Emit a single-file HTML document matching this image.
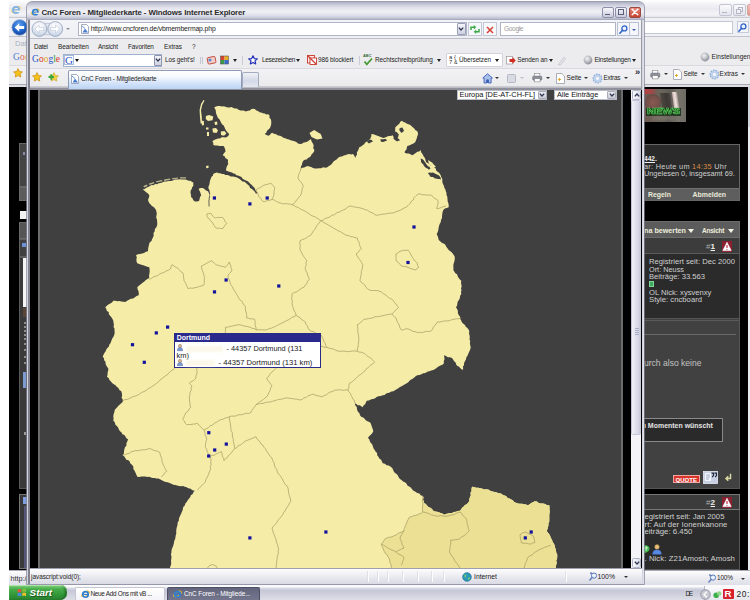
<!DOCTYPE html>
<html lang="de">
<head>
<meta charset="utf-8">
<title>CnC Foren - Mitgliederkarte - Windows Internet Explorer</title>
<style>
html,body{margin:0;padding:0;}
body{width:750px;height:600px;overflow:hidden;position:relative;background:#fff;font-family:"Liberation Sans",sans-serif;font-size:7.5px;color:#1c1c1c;}
.a{position:absolute;white-space:nowrap;}
.t{position:absolute;white-space:nowrap;line-height:10px;height:10px;}
.inp{background:#fff;border:1px solid #b4b9c9;box-sizing:border-box;}
.ar{position:absolute;width:0;height:0;border-left:2px solid transparent;border-right:2px solid transparent;border-top:2.5px solid #333;}
.sq{position:absolute;width:3px;height:3px;background:#10109a;}
svg{position:absolute;overflow:visible;}
</style>
</head>
<body>

<!-- ================= BACK WINDOW ================= -->
<div class="a" style="left:9.3px;top:0.0px;width:741.0px;height:586.0px;background:#000;"></div>
<div class="a" style="left:9.3px;top:0.0px;width:741.0px;height:18.0px;background:linear-gradient(#ffffff,#f3f3f7 25%,#e9e9ef 50%,#f4f4f8 85%,#e4e4ea);border-bottom:1px solid #c9cad2;box-sizing:border-box;"></div>
<div class="a" style="left:9.3px;top:18.0px;width:741.0px;height:19.0px;background:#eff0f4;border-bottom:1px solid #c2c3cc;box-sizing:border-box;"></div>
<div class="a" style="left:9.3px;top:37.0px;width:741.0px;height:28.0px;background:#ececee;"></div>
<div class="a" style="left:9.3px;top:64.5px;width:741.0px;height:20.5px;background:linear-gradient(#f1f1f3,#ebebee);border-top:1px solid #d9d9de;border-bottom:1px solid #a9aab4;box-sizing:border-box;"></div>
<div class="a" style="left:9.3px;top:85.0px;width:741.0px;height:2.0px;background:#dcdde2;"></div>
<svg style="left:10.8px;top:3.5px" width="10" height="11" viewBox="0 0 20 22"><ellipse cx="10" cy="11" rx="9.5" ry="4.2" transform="rotate(-32 10 11)" fill="none" stroke="#efd27a" stroke-width="2.2"/><circle cx="10" cy="12" r="6.2" fill="none" stroke="#7fb2e4" stroke-width="3.4"/><rect x="5" y="10.6" width="11" height="2.6" fill="#7fb2e4"/><rect x="11" y="13.2" width="7" height="3" fill="#f5f5f9"/></svg>
<svg style="left:11px;top:19px" width="17" height="17" viewBox="0 0 17 17"><defs><radialGradient id="bb" cx="0.45" cy="0.3" r="0.75"><stop offset="0" stop-color="#5aa0f0"/><stop offset="0.6" stop-color="#1f62c8"/><stop offset="1" stop-color="#123f95"/></radialGradient></defs><circle cx="8.7" cy="8.5" r="7.8" fill="url(#bb)" stroke="#8fa5cc" stroke-width="0.8"/><path d="M3.6 8.5L8.2 4.2v2.7h5v3.2h-5v2.7z" fill="#fff"/></svg>
<div class="t" style="left:15.0px;top:38.8px;font-size:7.71px;color:#a9b0c0;">Datei</div>
<div class="t" style="left:13px;top:49.5px;font-size:9.51px;font-family:'Liberation Serif',serif;line-height:14px;height:14px;"><span style="color:#4f78d8">G</span><span style="color:#e06a5c">o</span><span style="color:#ecc050">o</span><span style="color:#4f78d8">g</span><span style="color:#5fb56c">l</span><span style="color:#e06a5c">e</span></div>
<svg style="left:13px;top:68.3px" width="10" height="10" viewBox="0 0 10 10"><path d="M5 0.6l1.4 2.9 3.1.4-2.3 2.1.6 3.1L5 7.6 2.2 9.1l.6-3.1L.5 3.9l3.1-.4z" fill="#f5c21c" stroke="#c98a10" stroke-width="0.7" stroke-linejoin="round"/></svg>
<div class="a" style="left:19.0px;top:142.7px;width:8.5px;height:44.0px;background:#444;border:1px solid #666;border-right:none;box-sizing:border-box;"></div>
<div class="a" style="left:23.0px;top:152.0px;width:2.0px;height:3.0px;background:#8a8ab0;"></div>
<div class="a" style="left:19.0px;top:186.7px;width:8.5px;height:14.0px;background:#5c5c5c;border:1px solid #6a6a6a;border-right:none;box-sizing:border-box;"></div>
<div class="a" style="left:20.0px;top:211.0px;width:7.5px;height:7.5px;background:#f2f2f2;"></div>
<div class="a" style="left:19.0px;top:221.7px;width:8.5px;height:17.0px;background:#555;border:1px solid #6a6a6a;border-right:none;box-sizing:border-box;"></div>
<div class="a" style="left:19.0px;top:238.5px;width:8.5px;height:18.5px;background:#404040;border:1px solid #606060;border-right:none;box-sizing:border-box;"></div>
<div class="a" style="left:22.3px;top:242.7px;width:4.0px;height:4.6px;background:#6f8fd8;"></div>
<div class="a" style="left:19.0px;top:257.0px;width:8.5px;height:231.5px;background:#3a3a3a;border:1px solid #5a5a5a;border-right:none;box-sizing:border-box;"></div>
<div class="a" style="left:23.3px;top:258.0px;width:4.0px;height:49.0px;background:#f5f5f5;"></div>
<div class="a" style="left:22.5px;top:308.0px;width:4.5px;height:9.0px;background:#5a4638;"></div>
<div class="a" style="left:23.5px;top:322.0px;width:2.0px;height:2.2px;background:#8e8e8e;"></div>
<div class="a" style="left:23.5px;top:326.0px;width:2.0px;height:2.2px;background:#8e8e8e;"></div>
<div class="a" style="left:23.5px;top:330.0px;width:2.0px;height:2.2px;background:#8e8e8e;"></div>
<div class="a" style="left:23.5px;top:334.0px;width:2.0px;height:2.2px;background:#8e8e8e;"></div>
<div class="a" style="left:23.5px;top:338.0px;width:2.0px;height:2.2px;background:#8e8e8e;"></div>
<div class="a" style="left:23.5px;top:343.0px;width:2.0px;height:2.2px;background:#8e8e8e;"></div>
<div class="a" style="left:23.5px;top:349.0px;width:2.0px;height:2.2px;background:#8e8e8e;"></div>
<div class="a" style="left:23.5px;top:356.0px;width:2.0px;height:2.2px;background:#8e8e8e;"></div>
<div class="a" style="left:23.5px;top:362.0px;width:2.0px;height:2.2px;background:#8e8e8e;"></div>
<div class="a" style="left:22.5px;top:372.0px;width:3.5px;height:16.0px;background:#7c9cd0;"></div>
<div class="a" style="left:23.5px;top:432.0px;width:2.0px;height:3.0px;background:#9a9a9a;"></div>
<div class="a" style="left:19.0px;top:494.0px;width:8.5px;height:75.0px;background:#3a3a3a;border:1px solid #777;border-right:none;box-sizing:border-box;"></div>
<div class="a" style="left:22.5px;top:497.0px;width:4.0px;height:6.5px;background:#7f9fe0;"></div>
<div class="a" style="left:23.5px;top:506.0px;width:2.5px;height:62.0px;background:#55557a;"></div>
<div class="a" style="left:9.3px;top:570.0px;width:741.0px;height:15.5px;background:linear-gradient(#fdfdfe,#ececf2 45%,#dcdde6);border-top:1px solid #a7a9b8;box-sizing:border-box;"></div>
<div class="t" style="left:10.4px;top:573.6px;font-size:7.32px;color:#333;">http://</div>
<div class="a" style="left:719.0px;top:4.0px;width:12.5px;height:11.5px;background:linear-gradient(#fbfbfd,#e3e4ec);border:1px solid #c3c5d3;border-radius:2px;box-sizing:border-box;"></div>
<div class="a" style="left:722.0px;top:11.5px;width:5.0px;height:1.6px;background:#b4b6c8;"></div>
<div class="a" style="left:733.0px;top:4.0px;width:12.5px;height:11.5px;background:linear-gradient(#fbfbfd,#e3e4ec);border:1px solid #c3c5d3;border-radius:2px;box-sizing:border-box;"></div>
<div class="a" style="left:737.5px;top:7.0px;width:5.0px;height:4.5px;background:transparent;border:1px solid #b4b6c8;box-sizing:border-box;"></div>
<div class="a" style="left:735.5px;top:9.0px;width:5.0px;height:4.5px;background:#f1f1f6;border:1px solid #b4b6c8;box-sizing:border-box;"></div>
<div class="a" style="left:747.0px;top:4.0px;width:12.5px;height:11.5px;background:linear-gradient(#f3c0b8,#e39588);border:1px solid #d3a8a0;border-radius:2px;box-sizing:border-box;"></div>
<div class="a" style="left:640.0px;top:20.5px;width:92.5px;height:13.0px;background:#fff;border:1px solid #c3c7d6;box-sizing:border-box;"></div>
<div class="a" style="left:736.5px;top:20.5px;width:12.0px;height:12.5px;background:#f4f6fb;border:1px solid #c5cbdc;box-sizing:border-box;"></div>
<svg style="left:738.3px;top:22.5px" width="9" height="9" viewBox="0 0 9 9"><circle cx="5.4" cy="3.4" r="2.5" fill="#eaf2ff" stroke="#2d62c8" stroke-width="1.3"/><path d="M3.6 5.3L0.9 8.2" stroke="#2d62c8" stroke-width="1.6" stroke-linecap="round"/></svg>
<svg style="left:699.5px;top:52px" width="10" height="10" viewBox="0 0 10 10"><circle cx="5" cy="5" r="4.4" fill="url(#bl)"/></svg>
<div class="t" style="left:711.6px;top:51.8px;font-size:6.48px;color:#222;">Einstellungen</div>
<svg style="left:649.5px;top:69.5px" width="10.5" height="9.6" viewBox="0 0 12 11"><rect x="3" y="0.5" width="6" height="3.5" fill="#fff" stroke="#777" stroke-width="0.6"/><rect x="0.8" y="3.6" width="10.4" height="4.6" rx="1" fill="#8e919c" stroke="#5d606b" stroke-width="0.6"/><rect x="2.8" y="6.6" width="6.4" height="3.6" fill="#fff" stroke="#777" stroke-width="0.6"/></svg>
<div class="ar" style="left:663.9px;top:72.9px;border-top-color:#333;border-left-width:2.1px;border-right-width:2.1px;border-top-width:2.6px"></div>
<svg style="left:672.5px;top:69px" width="9" height="11" viewBox="0 0 9 11"><path d="M0.5 0.5h5.3l2.7 2.7v7.3h-8z" fill="#fff" stroke="#8b8f9e" stroke-width="0.7"/><path d="M2 6.5h3M3.5 5v3" stroke="#e0a020" stroke-width="0.9"/></svg>
<div class="t" style="left:683.6px;top:69.4px;font-size:6.42px;letter-spacing:-0.16px;color:#222;">Seite</div>
<div class="ar" style="left:700.5px;top:72.9px;border-top-color:#333;border-left-width:2.1px;border-right-width:2.1px;border-top-width:2.6px"></div>
<svg style="left:708.5px;top:69px" width="11" height="11" viewBox="0 0 11 11"><circle cx="5.5" cy="5.5" r="4.3" fill="#c4d6ee" stroke="#8fb0dc" stroke-width="1.3" stroke-dasharray="1.7 0.9"/><circle cx="5.5" cy="5.5" r="2.1" fill="#f4f7fc" stroke="#a9c0e0" stroke-width="0.6"/></svg>
<div class="t" style="left:719.6px;top:69.4px;font-size:6.49px;color:#222;">Extras</div>
<div class="ar" style="left:741.4px;top:72.9px;border-top-color:#333;border-left-width:2.1px;border-right-width:2.1px;border-top-width:2.6px"></div>
<div class="a" style="left:644.4px;top:89.2px;width:41.2px;height:32.4px;background:linear-gradient(90deg,#6e5a52,#6a665c 45%,#5e5a54 60%,#77746c 80%,#6f6c66);"></div>
<div class="a" style="left:644.4px;top:89.2px;width:13.0px;height:4.5px;background:linear-gradient(90deg,#b84040,#a04848 60%,rgba(120,90,80,0));"></div>
<div class="a" style="left:644.8px;top:94.0px;width:16.5px;height:17.0px;background:radial-gradient(circle at 50% 50%,#8a5a52,#74504a 55%,#5a4640 80%,rgba(90,80,70,0));border-radius:50%;"></div>
<div class="a" style="left:661.0px;top:93.0px;width:10.0px;height:16.0px;background:linear-gradient(90deg,#4e4842,#3e3834 60%,#4a4440);transform:skewX(8deg);"></div>
<div class="a" style="left:672.8px;top:92.0px;width:5.0px;height:16.0px;background:linear-gradient(90deg,#c9b0ac,#f0e4e0 50%,#a89890);transform:skewX(8deg);filter:blur(0.4px);"></div>
<div class="a" style="left:646.0px;top:107.5px;width:35.0px;height:8.0px;background:rgba(10,40,12,0.75);filter:blur(0.5px);"></div>
<div class="t" style="left:646.8px;top:106.3px;font-size:9.57px;font-weight:bold;color:#14501a;-webkit-text-stroke:0.55px #5fdc5f;transform-origin:0 50%;transform:scaleX(1.157);">NEWS</div>
<div class="a" style="left:652.0px;top:116.0px;width:22.0px;height:4.0px;background:rgba(150,140,128,0.35);filter:blur(0.8px);"></div>
<div class="a" style="left:630.0px;top:143.8px;width:109.5px;height:57.0px;background:#2a2a2a;border:1px solid #666;box-sizing:border-box;"></div>
<div class="t" style="left:644.0px;top:154.4px;font-size:6.59px;font-weight:bold;color:#f0f0f0;text-decoration:underline;">442</div>
<div class="t" style="left:655.0px;top:154.4px;font-size:7.20px;font-weight:bold;color:#f0f0f0;">.</div>
<div class="t" style="left:644px;top:161.9px;font-size:7.3px;color:#cfcfcf;letter-spacing:0.3px;">ar: Heute um <span style="color:#d68a4a">14:35</span> Uhr</div>
<div class="t" style="left:644.0px;top:169.2px;font-size:7.34px;color:#cfcfcf;">Ungelesen 0, insgesamt 69.</div>
<div class="a" style="left:630.0px;top:187.5px;width:109.0px;height:12.5px;background:#5e5e5e;border-top:1px solid #707070;box-sizing:border-box;"></div>
<div class="t" style="left:648.0px;top:189.9px;font-size:6.90px;font-weight:bold;color:#e9e9da;">Regeln</div>
<div class="t" style="left:692.5px;top:189.9px;font-size:6.93px;font-weight:bold;color:#e9e9da;">Abmelden</div>
<div class="a" style="left:630.0px;top:221.3px;width:109.5px;height:17.0px;background:#5c5c5c;border:1px solid #6c6c6c;box-sizing:border-box;"></div>
<div class="t" style="left:644.0px;top:225.9px;font-size:7.20px;font-weight:bold;color:#eeeedd;">na bewerten</div>
<div class="ar" style="left:687.6px;top:229.0px;border-top-color:#f4f4e8;border-left-width:3.4px;border-right-width:3.4px;border-top-width:4.2px"></div>
<div class="t" style="left:702.0px;top:225.9px;font-size:6.57px;letter-spacing:-0.27px;font-weight:bold;color:#eeeedd;">Ansicht</div>
<div class="ar" style="left:727.6px;top:229.0px;border-top-color:#f4f4e8;border-left-width:3.4px;border-right-width:3.4px;border-top-width:4.2px"></div>
<div class="a" style="left:630.0px;top:238.0px;width:109.5px;height:16.0px;background:#3c3c3c;border:1px solid #5a5a5a;border-top:none;box-sizing:border-box;"></div>
<div class="t" style="left:706.0px;top:242.2px;font-size:8.09px;color:#aaa;">#</div>
<div class="t" style="left:710.5px;top:242.2px;font-size:8.09px;font-weight:bold;color:#f0f0f0;text-decoration:underline;">1</div>
<svg style="left:722.0px;top:241.0px" width="10" height="11" viewBox="0 0 10 11"><rect x="0" y="0" width="10" height="11" fill="#8a2030"/><path d="M5 1.3L9.2 9.6H0.8z" fill="#fff" stroke="#fff" stroke-width="0.6" stroke-linejoin="round"/><path d="M5 4v3M5 7.9v.9" stroke="#c0203a" stroke-width="1.1"/></svg>
<div class="a" style="left:630.0px;top:254.0px;width:109.5px;height:65.0px;background:#2b2b2b;border:1px solid #555;border-top:none;box-sizing:border-box;"></div>
<div class="t" style="left:649.0px;top:257.2px;font-size:7.66px;color:#cfcfcf;">Registriert seit: Dec 2000</div>
<div class="t" style="left:649.0px;top:264.7px;font-size:7.32px;color:#cfcfcf;">Ort: Neuss</div>
<div class="t" style="left:649.0px;top:272.4px;font-size:7.63px;color:#cfcfcf;">Beiträge: 33.563</div>
<div class="a" style="left:649.0px;top:281.3px;width:5.0px;height:5.5px;background:#3fa860;border:1px solid #7fd89a;box-sizing:border-box;"></div>
<div class="t" style="left:649.0px;top:287.9px;font-size:7.63px;color:#cfcfcf;">OL Nick: xysvenxy</div>
<div class="t" style="left:649.0px;top:295.4px;font-size:7.69px;color:#cfcfcf;">Style: cncboard</div>
<div class="a" style="left:630.0px;top:319.0px;width:109.5px;height:170.0px;background:#414141;border:1px solid #555;border-top:none;box-sizing:border-box;"></div>
<div class="a" style="left:631.0px;top:320.0px;width:107.5px;height:0.8px;background:#5a5a5a;"></div>
<div class="a" style="left:644.0px;top:333.6px;width:92.0px;height:0.8px;background:#6a6a6a;"></div>
<div class="t" style="left:644.0px;top:358.3px;font-size:8.55px;color:#c4c4c4;">urch also keine</div>
<div class="a" style="left:630.0px;top:418.0px;width:92.5px;height:24.0px;background:#2a2a2a;border:1px solid #8a8a8a;box-sizing:border-box;"></div>
<div class="t" style="left:644.0px;top:421.2px;font-size:6.98px;font-weight:bold;color:#e4e4e4;">ı Momenten wünscht</div>
<div class="a" style="left:673.0px;top:475.3px;width:26.5px;height:7.5px;background:#d8342c;border:1px solid #f0a8a0;box-sizing:border-box;"></div>
<div class="t" style="left:675.5px;top:474.6px;font-size:6.05px;font-weight:bold;color:#fff;">QUOTE</div>
<svg style="left:703px;top:471px" width="15" height="13" viewBox="0 0 15 13"><rect x="0.5" y="0.5" width="14" height="12" fill="#c8d0e4" stroke="#e8ecf8" stroke-width="0.8"/><rect x="2" y="2" width="6" height="8" fill="#f4f6fc"/><path d="M8.5 2.2h2v2.2l-1.2 1.8M11.5 2.2h2v2.2l-1.2 1.8" stroke="#20243a" stroke-width="1.2" fill="none"/><path d="M3 4h4M3 6h4M3 8h3" stroke="#6a7aa0" stroke-width="0.6"/></svg>
<svg style="left:724px;top:473px" width="9" height="10" viewBox="0 0 9 10"><path d="M6.5 0.8v4.7H2.6M4.3 3.4L2 5.6l2.3 2.2" fill="none" stroke="#d8d8a0" stroke-width="1.5"/></svg>
<div class="a" style="left:630.0px;top:493.8px;width:109.5px;height:16.5px;background:#3c3c3c;border:1px solid #777;box-sizing:border-box;"></div>
<div class="t" style="left:706.0px;top:497.9px;font-size:8.09px;color:#aaa;">#</div>
<div class="t" style="left:710.5px;top:497.9px;font-size:8.09px;font-weight:bold;color:#f0f0f0;text-decoration:underline;">2</div>
<svg style="left:722.0px;top:496.5px" width="10" height="11" viewBox="0 0 10 11"><rect x="0" y="0" width="10" height="11" fill="#8a2030"/><path d="M5 1.3L9.2 9.6H0.8z" fill="#fff" stroke="#fff" stroke-width="0.6" stroke-linejoin="round"/><path d="M5 4v3M5 7.9v.9" stroke="#c0203a" stroke-width="1.1"/></svg>
<div class="a" style="left:630.0px;top:510.0px;width:109.5px;height:60.0px;background:#2b2b2b;border:1px solid #555;border-top:none;box-sizing:border-box;"></div>
<div class="t" style="left:644.5px;top:512.4px;font-size:7.74px;color:#cfcfcf;">egistriert seit: Jan 2005</div>
<div class="t" style="left:644.5px;top:519.9px;font-size:7.78px;letter-spacing:0.10px;color:#cfcfcf;">rt: Auf der Ionenkanone</div>
<div class="t" style="left:644.5px;top:527.4px;font-size:7.78px;letter-spacing:0.03px;color:#cfcfcf;">eiträge: 6.450</div>
<svg style="left:644px;top:543.5px" width="20" height="11" viewBox="0 0 20 11"><path d="M0 1.5c3-.8 5 .6 5.5 2.6.4 2-1 4.5-5.5 5z" fill="#3fb850"/><path d="M0 4h4M2.2 2v5" stroke="#d8f8d0" stroke-width="0.9"/><circle cx="13" cy="3" r="2.4" fill="#e8c078" stroke="#8a6a30" stroke-width="0.5"/><path d="M8.5 10.5c0-3.6 1.8-4.8 4.5-4.8s4.5 1.2 4.5 4.8z" fill="#5a8ae0" stroke="#2a4a90" stroke-width="0.5"/></svg>
<div class="t" style="left:644.5px;top:554.2px;font-size:7.78px;letter-spacing:0.05px;color:#cfcfcf;">. Nick: Z21Amosh; Amosh</div>
<div class="a" style="left:747.5px;top:87.0px;width:2.5px;height:483.0px;background:#eaeaf0;"></div>
<div class="a" style="left:747.5px;top:87.0px;width:2.5px;height:40.0px;background:#d2d3da;"></div>
<svg style="left:708px;top:573.5px" width="9" height="9" viewBox="0 0 9 9"><circle cx="5" cy="3.6" r="2.6" fill="#eaf2ff" stroke="#5a7ab8" stroke-width="1"/><path d="M3.2 5.4L0.9 8" stroke="#5a7ab8" stroke-width="1.4" stroke-linecap="round"/><path d="M1 1.2h2M2 .2v2" stroke="#3a58a8" stroke-width="0.7"/></svg>
<div class="t" style="left:717.0px;top:573.3px;font-size:6.42px;letter-spacing:-0.14px;color:#222;">100%</div>
<div class="ar" style="left:741.4px;top:577.5px;border-top-color:#333;border-left-width:2.1px;border-right-width:2.1px;border-top-width:2.6px"></div>

<!-- ================= FRONT WINDOW ================= -->
<div class="a" style="left:27.0px;top:2.0px;width:617.0px;height:582.0px;background:#d2d4df;border-radius:5px 5px 0 0;box-shadow:0 0 0 0.7px #7e8196;"></div>
<div class="a" style="left:27.0px;top:2.0px;width:617.0px;height:17.5px;background:linear-gradient(#adb0c3,#c9cbd9 14%,#e2e3ec 32%,#f0f0f5 55%,#d9dbe6 78%,#b4b7c9 96%,#8f92a4);border-radius:5px 5px 0 0;"></div>
<div class="a" style="left:29.5px;top:19.5px;width:612.0px;height:19.5px;background:linear-gradient(#f4f5f8,#eeeff3);border-bottom:1px solid #bcbeca;box-sizing:border-box;"></div>
<div class="a" style="left:29.5px;top:39.0px;width:612.0px;height:14.0px;background:#ececee;"></div>
<div class="a" style="left:29.5px;top:53.0px;width:612.0px;height:15.0px;background:#ececee;"></div>
<div class="a" style="left:29.5px;top:68.0px;width:612.0px;height:18.0px;background:linear-gradient(#f2f2f4,#ebebee);border-top:1px solid #d9d9de;box-sizing:border-box;"></div>
<div class="a" style="left:29.5px;top:86.0px;width:612.0px;height:2.0px;background:linear-gradient(#d5d6dc,#b4b5bc);"></div>
<div class="a" style="left:29.5px;top:88.0px;width:612.0px;height:2.0px;background:#8f9099;"></div>
<div class="a" style="left:28.4px;top:19.5px;width:1.5px;height:564.0px;background:#81828d;"></div>
<div class="a" style="left:641.1px;top:19.5px;width:1.4px;height:564.0px;background:#9b9ca6;"></div>
<div class="a" style="left:642.5px;top:19.5px;width:1.5px;height:564.0px;background:#dfe0e8;"></div>
<svg style="left:31.3px;top:6.8px" width="8.6" height="9.5" viewBox="0 0 20 22"><ellipse cx="10" cy="11" rx="9.5" ry="4.2" transform="rotate(-32 10 11)" fill="none" stroke="#e8b730" stroke-width="2.2"/><circle cx="10" cy="12" r="6.2" fill="none" stroke="#2f7fd0" stroke-width="3.4"/><rect x="5" y="10.6" width="11" height="2.6" fill="#2f7fd0"/><rect x="11" y="13.2" width="7" height="3" fill="#f1f1f6"/></svg>
<div class="t" style="left:41.5px;top:7.7px;font-size:7.90px;letter-spacing:-0.12px;font-weight:bold;color:#2b2b2b;">CnC Foren - Mitgliederkarte - Windows Internet Explorer</div>
<div class="a" style="left:601.5px;top:6.5px;width:12.0px;height:11.0px;background:linear-gradient(#f6f7fb,#c9cbdc);border:1px solid #8d90a8;border-radius:2px;box-sizing:border-box;"></div>
<div class="a" style="left:604.5px;top:13.5px;width:5.0px;height:1.6px;background:#5b5f7c;"></div>
<div class="a" style="left:615.0px;top:6.5px;width:12.0px;height:11.0px;background:linear-gradient(#f6f7fb,#c9cbdc);border:1px solid #8d90a8;border-radius:2px;box-sizing:border-box;"></div>
<div class="a" style="left:617.8px;top:9.0px;width:6.5px;height:5.5px;background:transparent;border:1px solid #5b5f7c;border-top-width:1.8px;box-sizing:border-box;"></div>
<div class="a" style="left:628.5px;top:6.5px;width:12.0px;height:11.0px;background:linear-gradient(#e88a7a,#c8402e);border:1px solid #9a4a40;border-radius:2px;box-sizing:border-box;"></div>
<svg style="left:630.5px;top:8px" width="8" height="8" viewBox="0 0 8 8"><path d="M1.2 1.2L6.8 6.8M6.8 1.2L1.2 6.8" stroke="#fff" stroke-width="1.5" stroke-linecap="round"/></svg>
<svg style="left:31px;top:20px" width="34" height="18" viewBox="0 0 34 18"><defs><radialGradient id="nb" cx="0.5" cy="0.3" r="0.75"><stop offset="0" stop-color="#ffffff"/><stop offset="0.55" stop-color="#e4e9f2"/><stop offset="1" stop-color="#b4c4dc"/></radialGradient></defs><rect x="8" y="3.2" width="17" height="11.600" fill="#e3e7ef" stroke="#aab4c8" stroke-width="0.700"/><circle cx="8.400" cy="9" r="7.400" fill="url(#nb)" stroke="#9eaac2" stroke-width="0.900"/><circle cx="24.200" cy="9" r="7.400" fill="url(#nb)" stroke="#9eaac2" stroke-width="0.900"/><path d="M3.900 9L8.100 5v2.600h4.700v2.800H8.100V13z" fill="#fff" stroke="#b4bfd4" stroke-width="0.600"/><path d="M28.700 9L24.500 5v2.600h-4.700v2.800h4.700V13z" fill="#fff" stroke="#b4bfd4" stroke-width="0.600"/></svg>
<div class="ar" style="left:65.8px;top:28.0px;border-top-color:#8a8fa0;border-left-width:2.2px;border-right-width:2.2px;border-top-width:2.8px"></div>
<div class="a" style="left:77.5px;top:22.0px;width:389.0px;height:14.0px;background:#fff;border:1px solid #aeb4c6;box-sizing:border-box;"></div>
<svg style="left:81px;top:24px" width="8" height="10" viewBox="0 0 8 10"><path d="M0.5 0.5h5l2 2v7h-7z" fill="#fff" stroke="#7d8aa5" stroke-width="0.7"/><path d="M1.5 8.5L4 4.5l3 4z" fill="#4a7fd0"/><path d="M1 2l3 2.5" stroke="#4a7fd0" stroke-width="0.8"/></svg>
<div class="t" style="left:90.7px;top:24.1px;font-size:6.84px;letter-spacing:-0.13px;color:#222;">http://www.cncforen.de/vbmembermap.php</div>
<div class="a" style="left:456.5px;top:23.0px;width:9.0px;height:12.0px;background:linear-gradient(#f4f5fa,#ccd0df);border:1px solid #9aa0b8;box-sizing:border-box;border-radius:1px;"></div>
<svg style="left:458px;top:27px" width="6" height="4" viewBox="0 0 6 4"><path d="M0.8 0.6L3 3l2.2-2.4" fill="none" stroke="#2c3350" stroke-width="1.2"/></svg>
<div class="a" style="left:468.0px;top:22.0px;width:13.5px;height:14.0px;background:#f7f8fb;border:1px solid #c3c7d6;box-sizing:border-box;"></div>
<svg style="left:470px;top:24.5px" width="10" height="9" viewBox="0 0 10 9"><path d="M1 5V2.2h3.5" fill="none" stroke="#39a845" stroke-width="1.5"/><path d="M3.8 0l2.4 2.2-2.4 2.2z" fill="#39a845"/><path d="M9 4v2.8H5.5" fill="none" stroke="#39a845" stroke-width="1.5"/><path d="M6.2 9L3.8 6.8l2.4-2.2z" fill="#39a845"/></svg>
<div class="a" style="left:483.0px;top:22.0px;width:13.5px;height:14.0px;background:#f7f8fb;border:1px solid #c3c7d6;box-sizing:border-box;"></div>
<svg style="left:486px;top:25.5px" width="8" height="8" viewBox="0 0 8 8"><path d="M1 1L7 7M7 1L1 7" stroke="#d64538" stroke-width="1.6"/></svg>
<div class="a" style="left:500.0px;top:22.0px;width:116.0px;height:14.0px;background:#fff;border:1px solid #aeb4c6;box-sizing:border-box;"></div>
<div class="t" style="left:504.0px;top:24.1px;font-size:6.66px;letter-spacing:-0.40px;color:#9a9a9a;">Google</div>
<div class="a" style="left:617.0px;top:22.0px;width:12.5px;height:14.0px;background:#f4f6fb;border:1px solid #b9c0d4;box-sizing:border-box;"></div>
<svg style="left:619px;top:24.5px" width="9" height="9" viewBox="0 0 9 9"><circle cx="5.4" cy="3.4" r="2.5" fill="#eaf2ff" stroke="#2d62c8" stroke-width="1.3"/><path d="M3.6 5.3L0.9 8.2" stroke="#2d62c8" stroke-width="1.6" stroke-linecap="round"/></svg>
<div class="a" style="left:629.5px;top:22.0px;width:9.0px;height:14.0px;background:#f4f6fb;border:1px solid #b9c0d4;border-left:none;box-sizing:border-box;"></div>
<div class="ar" style="left:631.8px;top:28.5px;border-top-color:#3d5fb0;border-left-width:2.2px;border-right-width:2.2px;border-top-width:2.8px"></div>
<div class="t" style="left:34.0px;top:41.6px;font-size:6.42px;letter-spacing:-0.25px;color:#222;">Datei</div>
<div class="t" style="left:58.0px;top:41.6px;font-size:6.42px;letter-spacing:-0.01px;color:#222;">Bearbeiten</div>
<div class="t" style="left:98.0px;top:41.6px;font-size:6.42px;letter-spacing:-0.18px;color:#222;">Ansicht</div>
<div class="t" style="left:128.0px;top:41.6px;font-size:6.42px;letter-spacing:-0.10px;color:#222;">Favoriten</div>
<div class="t" style="left:164.0px;top:41.6px;font-size:6.42px;letter-spacing:-0.04px;color:#222;">Extras</div>
<div class="t" style="left:192.0px;top:41.6px;font-size:6.42px;letter-spacing:-0.27px;color:#222;">?</div>
<div class="t" style="left:32px;top:52.0px;font-size:9.51px;font-family:'Liberation Serif',serif;line-height:14px;height:14px;"><span style="color:#2b55c8">G</span><span style="color:#d8382c">o</span><span style="color:#e5a816">o</span><span style="color:#2b55c8">g</span><span style="color:#2f9d3f">l</span><span style="color:#d8382c">e</span></div>
<div class="a" style="left:62.5px;top:53.5px;width:99.0px;height:13.0px;background:#fff;border:1px solid #9fb2cf;box-sizing:border-box;"></div>
<div class="t" style="left:65px;top:53.5px;font-size:11px;font-family:'Liberation Serif',serif;color:#2b55c8;line-height:13px;height:13px;">G</div>
<div class="a" style="left:64.0px;top:55.0px;width:9.5px;height:10.0px;background:transparent;border:1px solid #aabbd8;box-sizing:border-box;"></div>
<div class="ar" style="left:74.6px;top:58.8px;border-top-color:#111;border-left-width:2.4px;border-right-width:2.4px;border-top-width:3.0px"></div>
<div class="a" style="left:153.5px;top:54.5px;width:8.0px;height:11.0px;background:linear-gradient(#f4f5fa,#cdd1e0);border:1px solid #8e94ad;box-sizing:border-box;border-radius:1px;"></div>
<svg style="left:154.8px;top:58px" width="6" height="4" viewBox="0 0 6 4"><path d="M0.8 0.6L3 3l2.2-2.4" fill="none" stroke="#2c3350" stroke-width="1.2"/></svg>
<div class="t" style="left:165.0px;top:54.8px;font-size:6.42px;letter-spacing:-0.09px;color:#222;">Los geht's!</div>
<div class="a" style="left:199.5px;top:57.0px;width:1.0px;height:7.0px;background:#c5c7d3;"></div>
<div class="a" style="left:202.0px;top:57.0px;width:1.0px;height:7.0px;background:#c5c7d3;"></div>
<svg style="left:206.5px;top:55px" width="9" height="10" viewBox="0 0 9 10"><rect x="0.5" y="2" width="8" height="6.5" rx="1" fill="#f0d0c8" stroke="#c6473a" stroke-width="0.9" transform="rotate(-12 4.5 5)"/><circle cx="3" cy="5" r="1.6" fill="#5a8ad8"/></svg>
<svg style="left:220px;top:55px" width="9" height="10" viewBox="0 0 9 10"><rect x="0.5" y="1" width="4" height="4" fill="#d8432e"/><rect x="4.5" y="1" width="4" height="4" fill="#e8b020"/><rect x="0.5" y="5" width="4" height="4" fill="#3a9a48"/><rect x="4.5" y="5" width="4" height="4" fill="#3a6ad0"/><rect x="0.5" y="1" width="8" height="8" fill="none" stroke="#555" stroke-width="0.6"/></svg>
<div class="ar" style="left:232.6px;top:58.8px;border-top-color:#222;border-left-width:2.4px;border-right-width:2.4px;border-top-width:3.0px"></div>
<div class="a" style="left:241.5px;top:56.0px;width:1.0px;height:9.0px;background:#c9cbd6;"></div>
<svg style="left:248px;top:54.5px" width="10" height="10" viewBox="0 0 10 10"><path d="M5 0.8l1.3 2.8 3 .3-2.3 2 .7 3L5 7.4 2.3 8.9l.7-3-2.3-2 3-.3z" fill="#fff" stroke="#2530b8" stroke-width="1.2" stroke-linejoin="round"/></svg>
<div class="t" style="left:262.0px;top:54.8px;font-size:6.42px;letter-spacing:-0.26px;color:#222;">Lesezeichen</div>
<div class="ar" style="left:296.1px;top:58.8px;border-top-color:#222;border-left-width:2.4px;border-right-width:2.4px;border-top-width:3.0px"></div>
<svg style="left:306.5px;top:55px" width="10" height="10" viewBox="0 0 10 10"><rect x="0.5" y="0.5" width="7" height="7.5" fill="#fbe9e6" stroke="#c8382c" stroke-width="0.9"/><rect x="3" y="3" width="6.5" height="6.5" fill="#fff" stroke="#c8382c" stroke-width="0.9"/><path d="M1 1l8 8" stroke="#c8382c" stroke-width="1.1"/></svg>
<div class="t" style="left:318.0px;top:54.8px;font-size:6.42px;letter-spacing:-0.09px;color:#222;">986 blockiert</div>
<div class="a" style="left:359.0px;top:56.0px;width:1.0px;height:9.0px;background:#c9cbd6;"></div>
<svg style="left:363px;top:54.5px" width="10" height="11" viewBox="0 0 10 11"><path d="M1.5 6.5l2.3 2.8L9 3.5" fill="none" stroke="#4a9a3a" stroke-width="1.8"/></svg>
<div class="t" style="left:363.0px;top:51.1px;font-size:3.92px;font-weight:bold;color:#3a6a3a;">ABC</div>
<div class="t" style="left:375.0px;top:54.8px;font-size:6.42px;letter-spacing:-0.07px;color:#222;">Rechtschreibprüfung</div>
<div class="ar" style="left:436.6px;top:58.8px;border-top-color:#222;border-left-width:2.4px;border-right-width:2.4px;border-top-width:3.0px"></div>
<div class="a" style="left:445.5px;top:53.0px;width:57.5px;height:13.5px;background:#fff;border:1px solid #d2d4dc;box-sizing:border-box;border-radius:1px;"></div>
<div class="t" style="left:449.0px;top:52.3px;font-size:5.85px;letter-spacing:0.25px;color:#333;">a</div>
<div class="t" style="left:449.0px;top:57.3px;font-size:5.85px;letter-spacing:0.25px;color:#333;">7</div>
<div class="t" style="left:454.0px;top:52.3px;font-size:5.85px;letter-spacing:1.55px;color:#333;">{</div>
<div class="t" style="left:454.0px;top:57.3px;font-size:5.25px;color:#333;">&amp;</div>
<div class="t" style="left:459.0px;top:54.8px;font-size:6.42px;letter-spacing:-0.09px;color:#222;">Übersetzen</div>
<div class="ar" style="left:495.1px;top:58.8px;border-top-color:#222;border-left-width:2.4px;border-right-width:2.4px;border-top-width:3.0px"></div>
<svg style="left:506px;top:55px" width="10" height="10" viewBox="0 0 10 10"><rect x="0.5" y="1.5" width="6" height="7.5" fill="#fff" stroke="#999" stroke-width="0.7"/><path d="M3.5 4h3V2l3.2 3.5L6.5 9V7h-3z" fill="#d02c24"/></svg>
<div class="t" style="left:517.2px;top:54.8px;font-size:6.42px;letter-spacing:-0.08px;color:#222;">Senden an</div>
<div class="ar" style="left:548.6px;top:58.8px;border-top-color:#222;border-left-width:2.4px;border-right-width:2.4px;border-top-width:3.0px"></div>
<svg style="left:557px;top:55px" width="10" height="10" viewBox="0 0 10 10"><path d="M2 8.5L7 2.2l1.8 1.3L4 9.5 1.5 10z" fill="#e3e4ea" stroke="#c0c2cc" stroke-width="0.7"/></svg>
<svg style="left:583px;top:55px" width="10" height="10" viewBox="0 0 10 10"><defs><radialGradient id="bl" cx="0.4" cy="0.35" r="0.7"><stop offset="0" stop-color="#f4f4f4"/><stop offset="0.7" stop-color="#a9abb3"/><stop offset="1" stop-color="#7d7f88"/></radialGradient></defs><circle cx="5" cy="5" r="4.4" fill="url(#bl)"/></svg>
<div class="t" style="left:594.5px;top:54.8px;font-size:6.42px;letter-spacing:-0.17px;color:#222;">Einstellungen</div>
<div class="ar" style="left:632.1px;top:58.8px;border-top-color:#222;border-left-width:2.4px;border-right-width:2.4px;border-top-width:3.0px"></div>
<svg style="left:32.3px;top:71.8px" width="10" height="10" viewBox="0 0 10 10"><path d="M5 0.6l1.4 2.9 3.1.4-2.3 2.1.6 3.1L5 7.6 2.2 9.1l.6-3.1L.5 3.9l3.1-.4z" fill="#f5c21c" stroke="#c98a10" stroke-width="0.7" stroke-linejoin="round"/></svg>
<svg style="left:47.5px;top:72px" width="11" height="10" viewBox="0 0 11 10"><path d="M6 0.6l1.4 2.9 3.1.4-2.3 2.1.6 3.1L6 7.6 3.2 9.1l.6-3.1L1.5 3.9l3.1-.4z" fill="#f5d23c" stroke="#c9a020" stroke-width="0.6" stroke-linejoin="round"/><path d="M3.3 2.2v5.6M0.5 5h5.6" stroke="#3da83a" stroke-width="2"/></svg>
<div class="a" style="left:67.5px;top:69.5px;width:174.0px;height:19.0px;background:linear-gradient(#ffffff 0%,#f4f8fd 35%,#d6e5f9 65%,#bad3f5 100%);border:1px solid #8f9bb5;border-bottom:none;border-radius:2px 2px 0 0;box-sizing:border-box;"></div>
<svg style="left:71px;top:74px" width="8" height="10" viewBox="0 0 8 10"><path d="M0.5 0.5h5l2 2v7h-7z" fill="#fff" stroke="#7d8aa5" stroke-width="0.7"/><path d="M1.5 8.5L4 4.5l3 4z" fill="#4a7fd0"/><path d="M1 2l3 2.5" stroke="#4a7fd0" stroke-width="0.8"/></svg>
<div class="t" style="left:81.0px;top:73.8px;font-size:6.42px;letter-spacing:-0.13px;color:#222;">CnC Foren - Mitgliederkarte</div>
<div class="a" style="left:242.0px;top:71.5px;width:16.8px;height:15.5px;background:linear-gradient(#f0f1f6,#d3d8e8 55%,#e4e7f1);border:1px solid #a5abbf;border-bottom:none;border-radius:2px 2px 0 0;box-sizing:border-box;"></div>
<svg style="left:482px;top:72.5px" width="11" height="11" viewBox="0 0 11 11"><path d="M5.5 0.8L0.8 5h1.3v5h2.6V7h1.8v3h2.6V5h1.3z" fill="#a9c0ea" stroke="#3a5fb8" stroke-width="0.9" stroke-linejoin="round"/><rect x="4.6" y="6.6" width="1.900" height="3.400" fill="#3a5fb8"/></svg>
<div class="ar" style="left:495.4px;top:76.5px;border-top-color:#333;border-left-width:2.1px;border-right-width:2.1px;border-top-width:2.6px"></div>
<div class="a" style="left:507.0px;top:73.5px;width:9.0px;height:9.0px;background:#d9dbe2;border:1px solid #b5b8c4;border-radius:1.5px;box-sizing:border-box;"></div>
<div class="ar" style="left:520.4px;top:76.5px;border-top-color:#c0c2cc;border-left-width:2.1px;border-right-width:2.1px;border-top-width:2.6px"></div>
<svg style="left:532px;top:72.8px" width="10.5" height="9.6" viewBox="0 0 12 11"><rect x="3" y="0.5" width="6" height="3.5" fill="#fff" stroke="#777" stroke-width="0.6"/><rect x="0.8" y="3.6" width="10.4" height="4.6" rx="1" fill="#8e919c" stroke="#5d606b" stroke-width="0.6"/><rect x="2.8" y="6.6" width="6.4" height="3.6" fill="#fff" stroke="#777" stroke-width="0.6"/></svg>
<div class="ar" style="left:546.4px;top:76.5px;border-top-color:#333;border-left-width:2.1px;border-right-width:2.1px;border-top-width:2.6px"></div>
<svg style="left:556px;top:72.5px" width="9" height="11" viewBox="0 0 9 11"><path d="M0.5 0.5h5.3l2.7 2.7v7.3h-8z" fill="#fff" stroke="#8b8f9e" stroke-width="0.7"/><path d="M2 6.5h3M3.5 5v3" stroke="#e0a020" stroke-width="0.9"/></svg>
<div class="t" style="left:566.5px;top:73.1px;font-size:6.58px;color:#222;">Seite</div>
<div class="ar" style="left:583.9px;top:76.5px;border-top-color:#333;border-left-width:2.1px;border-right-width:2.1px;border-top-width:2.6px"></div>
<svg style="left:591.5px;top:72.5px" width="11" height="11" viewBox="0 0 11 11"><circle cx="5.5" cy="5.5" r="4.3" fill="#c4d6ee" stroke="#8fb0dc" stroke-width="1.3" stroke-dasharray="1.7 0.9"/><circle cx="5.5" cy="5.5" r="2.1" fill="#f4f7fc" stroke="#a9c0e0" stroke-width="0.6"/></svg>
<div class="t" style="left:603.5px;top:73.1px;font-size:6.42px;letter-spacing:-0.24px;color:#222;">Extras</div>
<div class="ar" style="left:624.4px;top:76.5px;border-top-color:#333;border-left-width:2.1px;border-right-width:2.1px;border-top-width:2.6px"></div>
<div class="t" style="left:635.0px;top:67.3px;font-size:9.35px;font-weight:bold;color:#2a2a3a;">»</div>
<div class="a" style="left:30.0px;top:90.0px;width:612.0px;height:478.0px;background:#000;"></div>
<div class="a" id="map" style="left:38px;top:90px;width:584.7px;height:478px;background:#404040;overflow:hidden;border-left:2px solid #6c6c6c;border-right:2px solid #6c6c6c;box-sizing:border-box;"><svg style="left:-1px;top:-2px" width="581" height="480" viewBox="39 88 581 480">
<defs><clipPath id="landclip"><polygon points="214.3,107.2 216.1,106.6 217.9,106.0 219.9,105.9 221.9,106.5 224.0,106.2 226.0,107.1 228.0,107.5 229.6,107.4 231.3,107.1 232.9,107.7 234.8,108.4 236.8,108.6 238.6,109.7 240.4,110.5 242.3,110.4 244.2,110.7 246.0,111.5 247.8,110.7 249.9,110.4 251.5,109.0 253.5,108.7 255.1,109.2 256.4,110.4 258.0,111.0 259.4,112.2 261.2,112.6 262.8,113.3 264.7,113.5 266.4,114.5 268.4,114.3 269.6,115.7 269.4,117.7 270.7,119.1 271.2,120.8 271.3,123.0 271.0,125.2 270.3,127.3 269.1,129.1 267.2,130.4 266.4,132.5 264.7,133.9 266.5,134.9 268.4,135.8 269.7,134.9 270.7,133.7 272.0,132.8 274.0,133.7 276.2,134.2 278.0,135.5 280.0,135.7 281.7,136.6 283.3,137.8 285.2,138.2 287.0,139.0 288.9,139.4 290.7,140.2 292.6,140.7 294.5,141.3 296.4,142.0 298.0,143.5 300.0,144.1 302.0,143.7 303.7,142.6 305.7,142.3 307.6,141.6 309.3,140.3 311.0,139.0 311.4,140.9 312.2,142.5 313.2,144.1 313.7,145.9 313.1,147.9 314.3,149.7 314.1,151.6 313.0,153.1 311.6,154.2 310.9,156.0 309.5,157.2 308.0,158.1 306.6,159.4 304.8,159.7 303.3,160.7 302.4,162.6 301.9,164.7 301.0,166.6 300.7,168.7 302.3,167.8 304.1,167.5 305.7,166.8 307.3,166.0 309.2,166.6 311.2,167.0 313.0,167.9 314.9,168.5 317.0,168.5 319.1,168.2 321.1,168.2 323.1,167.3 325.3,167.8 327.3,167.3 328.9,166.1 330.7,165.1 332.1,163.6 333.3,161.8 334.9,160.6 336.6,159.5 338.0,158.0 339.8,156.8 342.0,156.5 343.9,155.4 346.0,155.0 347.6,154.3 349.3,154.0 351.1,154.5 352.7,154.0 353.9,155.1 354.7,156.5 355.3,158.0 355.9,156.2 357.0,154.6 356.9,152.5 357.9,150.8 358.7,149.1 359.3,147.3 361.1,146.5 362.6,145.3 364.1,144.2 365.3,142.5 366.9,141.5 368.4,140.3 370.0,139.3 370.8,137.6 371.4,135.9 371.3,134.0 373.4,134.3 375.4,135.0 377.4,135.7 379.4,136.4 381.3,137.3 383.3,138.0 385.1,137.6 386.8,136.8 388.5,136.1 390.4,136.1 392.2,135.6 394.0,135.3 394.4,133.3 395.1,131.4 395.2,129.3 395.3,127.3 396.7,126.0 398.1,124.8 399.5,123.5 400.3,121.7 402.0,120.7 403.4,121.9 405.1,122.6 406.6,123.5 408.3,124.2 410.0,124.7 411.4,125.9 412.7,127.3 414.3,128.4 415.2,130.1 417.0,131.0 418.0,132.7 417.9,134.7 417.2,136.5 416.7,138.4 416.0,140.2 415.3,142.0 413.9,143.2 412.3,144.1 410.7,144.7 409.1,145.6 407.3,146.0 406.8,147.7 406.5,149.5 405.0,150.9 404.7,152.7 406.7,153.5 408.8,153.6 410.8,154.4 412.7,155.3 414.2,154.1 415.8,153.1 417.3,151.8 419.3,151.4 420.7,150.0 421.1,152.2 422.5,154.0 423.4,156.0 424.7,157.8 425.5,159.8 426.0,162.0 427.7,162.9 429.3,163.9 430.6,165.5 432.6,165.9 434.0,167.3 435.7,168.6 436.3,170.8 438.0,172.1 439.7,173.5 440.7,175.3 441.2,177.1 442.3,178.7 442.3,180.7 442.4,182.6 443.1,184.3 444.0,186.0 444.3,187.8 445.4,189.5 445.8,191.3 446.5,193.0 446.5,195.0 447.3,196.7 447.5,198.8 447.6,201.0 448.3,203.0 448.7,205.1 448.7,207.3 446.7,207.9 444.9,208.6 443.3,210.0 442.6,211.9 442.3,213.9 442.0,215.9 442.0,218.0 441.0,219.9 440.8,222.1 439.7,224.0 439.0,226.0 438.6,228.0 438.3,230.1 437.8,232.1 436.7,234.0 437.6,235.9 438.3,237.9 438.7,240.0 440.2,241.3 441.7,242.8 443.7,243.5 445.3,244.7 446.3,246.7 447.6,248.5 448.9,250.2 450.8,251.5 452.3,253.1 453.6,254.8 454.7,256.7 454.8,258.6 454.6,260.5 454.0,262.4 453.5,264.3 453.3,266.2 453.5,268.1 453.3,270.0 454.3,271.6 455.3,273.3 457.1,274.3 457.7,276.2 458.7,277.9 459.9,279.4 461.3,280.7 461.0,282.6 461.3,284.5 461.7,286.4 461.0,288.3 461.5,290.2 461.0,292.1 461.3,294.0 460.1,295.7 459.9,297.8 459.1,299.7 457.8,301.4 457.3,303.4 457.1,305.5 456.0,307.3 457.1,309.1 457.9,311.0 457.9,313.2 458.7,315.1 460.1,316.7 460.2,318.9 461.3,320.7 462.0,322.5 463.4,323.8 464.9,325.1 465.8,326.8 467.3,328.0 468.6,329.5 469.3,331.3 469.0,333.3 469.5,335.3 469.8,337.3 469.5,339.3 470.2,341.3 469.9,343.3 470.2,345.3 470.7,347.3 470.2,349.4 469.3,351.4 468.4,353.4 467.6,355.4 466.4,357.3 465.9,359.4 464.9,361.3 464.0,363.3 464.1,365.1 462.9,366.6 463.2,368.4 462.7,370.0 461.3,369.0 460.1,367.9 458.9,366.6 457.3,366.0 456.2,364.4 455.6,362.5 454.1,361.2 453.1,359.6 452.0,358.0 450.0,357.3 447.8,357.2 446.0,356.0 444.0,355.3 444.3,357.3 444.5,359.3 443.7,361.3 444.0,363.3 442.4,364.7 440.4,365.6 438.5,366.4 436.8,367.7 435.2,369.0 433.3,370.0 431.3,370.6 429.3,371.3 427.2,371.7 425.4,373.1 423.3,373.2 421.4,374.2 419.4,374.9 417.3,375.3 415.6,376.2 414.3,377.6 412.7,378.7 411.1,379.6 409.5,380.7 408.3,382.2 406.7,383.3 405.0,384.2 403.3,385.3 401.7,386.3 399.9,387.1 398.4,388.3 396.6,389.3 395.0,390.3 393.3,391.3 391.4,391.5 389.7,392.4 387.9,392.9 386.1,393.5 384.6,394.9 382.7,395.3 380.7,395.9 378.5,396.2 376.6,397.0 374.8,398.4 372.8,399.1 370.7,399.4 368.9,400.5 366.7,400.7 365.9,402.5 365.1,404.2 363.5,405.6 362.7,407.3 361.2,406.2 359.7,405.3 357.7,405.2 356.4,403.9 354.7,403.3 355.4,405.4 356.8,407.1 357.0,409.5 357.8,411.5 359.4,413.2 360.0,415.3 361.2,416.8 363.1,417.5 364.6,418.7 365.8,420.3 367.4,421.3 369.4,421.9 370.7,423.3 371.4,425.3 372.0,427.3 372.8,429.2 373.3,431.3 372.2,433.2 370.8,434.8 369.1,436.2 368.0,438.0 369.4,439.5 369.9,441.5 370.9,443.1 372.3,444.6 372.9,446.5 373.6,448.4 374.7,450.0 375.7,451.7 377.1,453.1 377.2,455.3 378.4,456.8 379.3,458.6 381.1,459.8 381.9,461.5 382.7,463.3 384.9,463.7 386.6,465.3 388.8,465.6 390.7,466.7 392.2,468.0 393.1,469.7 393.8,471.5 395.0,473.0 396.6,474.1 397.9,475.6 398.7,477.3 399.9,479.0 401.6,480.0 403.0,481.5 404.9,482.3 406.4,483.6 407.4,485.5 409.1,486.6 410.8,487.6 412.0,489.3 413.5,490.8 415.5,491.7 417.2,492.9 419.4,493.4 420.7,495.2 422.7,496.0 423.5,497.6 423.0,499.4 423.7,501.0 424.0,502.7 425.7,503.9 427.1,505.4 428.3,507.1 430.4,507.8 432.0,509.1 433.3,510.7 435.1,511.4 437.0,511.8 438.8,512.3 440.6,513.0 442.4,513.6 444.0,514.7 445.9,513.9 447.9,513.5 449.9,513.0 452.1,513.0 453.9,512.0 456.0,511.7 457.9,510.9 460.0,510.7 461.2,509.2 462.3,507.6 463.8,506.5 464.9,505.0 466.8,504.2 468.0,502.7 469.3,501.3 469.3,499.2 470.0,497.1 470.9,495.1 470.4,492.9 471.6,490.9 471.5,488.8 472.0,486.7 474.1,487.1 476.1,487.8 478.3,487.7 480.4,488.2 482.5,488.8 484.5,489.5 486.7,489.3 488.8,489.8 490.6,491.0 492.6,491.5 494.7,492.1 496.7,492.6 498.8,493.2 500.9,493.6 502.7,494.7 504.6,495.4 506.3,496.3 507.6,497.9 509.5,498.5 511.2,499.4 512.9,500.3 514.1,502.0 516.0,502.7 517.9,503.5 520.0,503.8 522.1,503.8 524.1,504.2 526.0,504.6 528.0,505.3 529.7,504.3 531.2,503.0 533.0,502.2 534.7,501.3 536.9,501.6 538.7,502.9 540.8,503.5 543.0,503.6 545.2,503.9 547.1,505.2 549.3,505.3 549.5,507.4 549.5,509.5 549.8,511.6 549.4,513.7 549.3,515.8 549.3,517.9 549.3,520.0 549.2,521.9 548.4,523.6 548.5,525.5 547.8,527.2 547.6,529.0 546.7,530.7 547.8,532.5 549.1,534.1 550.2,535.9 550.9,537.9 552.0,539.7 552.6,541.7 553.7,543.5 554.7,545.3 555.0,547.3 555.6,549.1 556.0,551.0 556.4,552.9 557.3,554.7 557.2,556.8 557.1,558.8 556.2,560.8 556.9,562.9 556.1,564.9 556.0,566.9 556.0,569.0 170.4,569.0 170.0,566.9 171.0,564.9 171.2,562.8 171.0,560.7 171.3,558.7 171.5,556.6 170.9,554.5 171.4,552.5 171.5,550.4 172.0,548.5 172.9,546.8 173.4,544.9 173.9,543.0 174.2,541.1 175.1,539.3 175.4,537.4 175.7,535.5 176.3,533.4 176.2,531.2 176.4,529.0 176.9,526.9 177.5,524.8 177.7,522.6 178.9,520.6 178.9,518.4 179.8,516.6 180.6,514.7 181.4,512.9 182.3,511.0 182.9,509.1 183.2,507.0 184.8,505.5 185.3,503.5 186.7,502.1 187.7,500.3 188.9,498.7 190.2,497.2 190.9,495.2 192.7,494.1 193.5,492.1 194.9,490.7 193.1,490.5 191.5,489.6 190.1,488.4 188.2,488.3 186.7,487.3 184.8,486.7 183.0,486.0 181.0,486.2 179.0,485.9 177.1,485.5 175.3,484.9 173.3,484.7 171.5,483.7 169.5,483.0 167.7,482.2 165.5,482.0 163.7,481.2 161.8,480.3 160.0,479.3 158.3,478.6 156.4,478.6 154.7,477.9 152.7,478.1 151.0,477.6 149.3,476.7 147.3,477.0 145.3,476.5 143.3,476.5 141.3,476.5 139.3,476.9 137.3,476.7 136.4,474.7 135.5,472.7 134.6,470.7 133.4,468.9 133.3,466.5 132.0,464.7 130.4,463.6 129.7,461.6 128.4,460.3 126.3,459.7 125.3,458.0 124.3,456.4 122.7,455.3 123.9,453.5 124.0,451.3 124.4,449.2 125.0,447.2 126.5,445.5 126.4,443.2 127.4,441.3 128.0,439.3 126.4,438.2 125.4,436.6 124.4,434.9 122.4,434.3 121.6,432.4 120.0,431.3 118.9,429.5 118.1,427.5 116.8,425.9 115.3,424.4 114.8,422.2 113.3,420.7 113.6,418.6 113.3,416.4 113.6,414.2 114.4,412.1 114.7,410.0 116.0,408.6 117.2,407.2 118.4,405.7 119.9,404.5 121.2,403.2 122.7,402.0 122.8,399.8 121.6,397.8 122.1,395.5 121.9,393.4 121.3,391.3 119.4,390.1 118.4,388.0 116.7,386.7 115.2,385.1 113.3,384.0 111.9,382.8 110.7,381.3 109.4,379.9 108.7,378.0 107.0,377.0 107.5,375.0 107.6,373.0 108.0,371.0 108.5,369.0 107.4,367.3 106.4,365.7 105.6,363.9 105.5,361.8 104.1,360.3 104.0,358.3 102.7,356.7 103.4,354.9 104.4,353.1 105.5,351.6 106.2,349.7 107.3,348.1 108.8,346.7 109.3,344.7 110.6,342.9 111.4,340.8 112.1,338.8 113.3,336.9 114.2,334.9 114.7,332.7 114.5,330.7 114.5,328.7 113.5,326.8 114.0,324.7 113.5,322.7 113.3,320.7 112.5,318.9 111.4,317.3 110.1,315.8 108.9,314.3 108.7,312.1 106.9,310.9 106.3,309.0 105.3,307.3 106.8,305.8 108.4,304.5 110.3,303.5 112.0,302.4 113.3,300.7 115.3,300.7 117.3,301.3 119.3,301.1 121.3,301.6 123.3,301.7 125.3,302.0 127.1,300.7 129.0,299.8 130.9,298.8 133.2,298.6 134.9,297.2 136.6,296.0 138.7,295.3 138.8,293.2 138.5,291.2 137.6,289.3 137.3,287.3 138.8,285.7 140.5,284.4 142.2,283.0 144.1,281.8 145.6,280.3 147.4,279.1 149.3,278.0 149.0,275.9 149.4,273.7 149.7,271.6 149.6,269.4 149.3,267.3 147.3,266.7 145.3,266.1 143.3,265.3 141.3,264.8 139.2,264.1 137.3,263.3 136.5,261.4 136.4,259.3 136.8,257.2 136.0,255.3 137.9,254.2 140.0,254.0 142.0,253.4 144.1,253.0 145.9,251.7 148.0,251.3 148.1,249.3 148.4,247.3 148.9,245.3 149.3,243.3 150.2,241.9 151.5,240.9 152.0,239.3 153.0,237.4 153.7,235.4 153.5,233.1 154.7,231.3 154.9,229.1 156.2,227.4 157.1,225.4 157.3,223.3 157.1,221.4 157.0,219.5 156.2,217.7 156.4,215.7 156.8,213.8 156.5,211.9 156.0,210.0 155.0,208.4 153.7,206.9 151.8,206.1 150.7,204.5 149.4,203.2 148.6,201.7 148.0,200.0 148.5,198.4 149.1,196.9 149.3,195.3 148.0,193.5 146.2,192.2 144.5,190.8 142.7,189.5 144.7,188.9 146.3,187.7 148.2,186.9 150.0,186.0 151.6,185.0 153.6,185.2 155.1,184.1 157.1,184.3 158.7,183.3 160.7,183.0 162.7,182.2 164.6,181.6 166.7,181.5 168.6,180.9 170.5,181.0 172.4,180.8 174.2,179.8 176.1,179.5 178.1,179.6 180.0,179.3 181.7,179.6 183.5,179.5 185.3,179.5 187.0,180.0 188.5,180.7 190.3,180.7 191.8,181.7 193.3,182.5 193.3,184.2 193.3,186.0 192.1,187.3 191.8,188.9 190.8,190.3 190.5,192.0 190.7,193.7 191.1,195.3 191.0,197.0 192.5,198.3 193.3,200.3 195.0,201.5 197.0,201.5 199.0,201.0 199.6,199.0 200.0,197.0 201.3,195.3 200.6,193.7 200.2,191.9 199.3,190.4 198.7,188.7 200.8,188.1 203.0,188.0 204.6,189.3 206.1,190.6 208.0,191.3 208.7,192.8 209.4,194.3 209.3,196.0 209.6,194.9 210.3,194.0 209.7,192.2 209.5,190.3 208.6,188.7 208.4,186.8 209.3,184.7 209.7,182.6 210.0,180.4 210.8,178.8 211.3,177.1 212.9,175.8 213.2,174.0 215.1,173.0 217.2,172.4 218.7,173.3 220.5,173.2 222.0,174.0 223.8,174.1 225.4,175.0 227.3,174.9 229.0,175.5 230.7,176.5 232.6,176.5 234.5,176.7 236.3,177.2 238.0,178.0 239.6,178.9 241.1,180.2 242.5,181.4 244.6,181.7 246.0,183.0 247.6,184.4 249.2,185.8 250.1,187.9 252.0,189.0 253.6,190.4 255.1,192.0 256.0,194.0 257.5,192.5 256.0,191.3 255.2,189.6 254.5,187.7 253.0,186.5 251.9,185.0 250.4,183.9 249.2,182.5 247.7,181.3 246.0,180.5 244.3,179.7 242.6,178.8 241.5,177.1 239.7,176.3 238.0,175.5 236.3,175.2 235.1,173.8 233.4,173.4 232.0,172.5 230.0,172.0 227.9,171.3 226.0,170.5 226.2,168.7 226.6,166.9 227.5,165.3 228.3,163.7 227.8,162.2 228.1,160.5 227.3,159.1 225.5,158.2 224.6,156.2 222.7,155.3 223.4,153.9 224.4,152.7 225.5,151.6 225.2,149.6 224.6,147.8 223.6,146.0 221.5,145.9 219.4,146.1 217.4,145.5 215.3,145.4 213.3,145.1 213.3,143.1 212.4,141.3 214.1,140.1 216.1,139.3 218.0,138.5 219.9,138.6 221.6,137.3 223.6,137.3 225.5,137.4 227.3,136.7 228.5,135.5 229.2,133.9 227.6,132.5 226.4,130.9 225.3,129.2 224.5,127.3 223.7,125.4 222.0,124.3 221.0,122.5 220.2,120.8 219.4,119.3 218.0,118.0 217.1,116.1 216.3,114.1 215.8,112.0 215.8,110.2 214.9,108.8"/></clipPath></defs>
<polygon points="214.3,107.2 216.1,106.6 217.9,106.0 219.9,105.9 221.9,106.5 224.0,106.2 226.0,107.1 228.0,107.5 229.6,107.4 231.3,107.1 232.9,107.7 234.8,108.4 236.8,108.6 238.6,109.7 240.4,110.5 242.3,110.4 244.2,110.7 246.0,111.5 247.8,110.7 249.9,110.4 251.5,109.0 253.5,108.7 255.1,109.2 256.4,110.4 258.0,111.0 259.4,112.2 261.2,112.6 262.8,113.3 264.7,113.5 266.4,114.5 268.4,114.3 269.6,115.7 269.4,117.7 270.7,119.1 271.2,120.8 271.3,123.0 271.0,125.2 270.3,127.3 269.1,129.1 267.2,130.4 266.4,132.5 264.7,133.9 266.5,134.9 268.4,135.8 269.7,134.9 270.7,133.7 272.0,132.8 274.0,133.7 276.2,134.2 278.0,135.5 280.0,135.7 281.7,136.6 283.3,137.8 285.2,138.2 287.0,139.0 288.9,139.4 290.7,140.2 292.6,140.7 294.5,141.3 296.4,142.0 298.0,143.5 300.0,144.1 302.0,143.7 303.7,142.6 305.7,142.3 307.6,141.6 309.3,140.3 311.0,139.0 311.4,140.9 312.2,142.5 313.2,144.1 313.7,145.9 313.1,147.9 314.3,149.7 314.1,151.6 313.0,153.1 311.6,154.2 310.9,156.0 309.5,157.2 308.0,158.1 306.6,159.4 304.8,159.7 303.3,160.7 302.4,162.6 301.9,164.7 301.0,166.6 300.7,168.7 302.3,167.8 304.1,167.5 305.7,166.8 307.3,166.0 309.2,166.6 311.2,167.0 313.0,167.9 314.9,168.5 317.0,168.5 319.1,168.2 321.1,168.2 323.1,167.3 325.3,167.8 327.3,167.3 328.9,166.1 330.7,165.1 332.1,163.6 333.3,161.8 334.9,160.6 336.6,159.5 338.0,158.0 339.8,156.8 342.0,156.5 343.9,155.4 346.0,155.0 347.6,154.3 349.3,154.0 351.1,154.5 352.7,154.0 353.9,155.1 354.7,156.5 355.3,158.0 355.9,156.2 357.0,154.6 356.9,152.5 357.9,150.8 358.7,149.1 359.3,147.3 361.1,146.5 362.6,145.3 364.1,144.2 365.3,142.5 366.9,141.5 368.4,140.3 370.0,139.3 370.8,137.6 371.4,135.9 371.3,134.0 373.4,134.3 375.4,135.0 377.4,135.7 379.4,136.4 381.3,137.3 383.3,138.0 385.1,137.6 386.8,136.8 388.5,136.1 390.4,136.1 392.2,135.6 394.0,135.3 394.4,133.3 395.1,131.4 395.2,129.3 395.3,127.3 396.7,126.0 398.1,124.8 399.5,123.5 400.3,121.7 402.0,120.7 403.4,121.9 405.1,122.6 406.6,123.5 408.3,124.2 410.0,124.7 411.4,125.9 412.7,127.3 414.3,128.4 415.2,130.1 417.0,131.0 418.0,132.7 417.9,134.7 417.2,136.5 416.7,138.4 416.0,140.2 415.3,142.0 413.9,143.2 412.3,144.1 410.7,144.7 409.1,145.6 407.3,146.0 406.8,147.7 406.5,149.5 405.0,150.9 404.7,152.7 406.7,153.5 408.8,153.6 410.8,154.4 412.7,155.3 414.2,154.1 415.8,153.1 417.3,151.8 419.3,151.4 420.7,150.0 421.1,152.2 422.5,154.0 423.4,156.0 424.7,157.8 425.5,159.8 426.0,162.0 427.7,162.9 429.3,163.9 430.6,165.5 432.6,165.9 434.0,167.3 435.7,168.6 436.3,170.8 438.0,172.1 439.7,173.5 440.7,175.3 441.2,177.1 442.3,178.7 442.3,180.7 442.4,182.6 443.1,184.3 444.0,186.0 444.3,187.8 445.4,189.5 445.8,191.3 446.5,193.0 446.5,195.0 447.3,196.7 447.5,198.8 447.6,201.0 448.3,203.0 448.7,205.1 448.7,207.3 446.7,207.9 444.9,208.6 443.3,210.0 442.6,211.9 442.3,213.9 442.0,215.9 442.0,218.0 441.0,219.9 440.8,222.1 439.7,224.0 439.0,226.0 438.6,228.0 438.3,230.1 437.8,232.1 436.7,234.0 437.6,235.9 438.3,237.9 438.7,240.0 440.2,241.3 441.7,242.8 443.7,243.5 445.3,244.7 446.3,246.7 447.6,248.5 448.9,250.2 450.8,251.5 452.3,253.1 453.6,254.8 454.7,256.7 454.8,258.6 454.6,260.5 454.0,262.4 453.5,264.3 453.3,266.2 453.5,268.1 453.3,270.0 454.3,271.6 455.3,273.3 457.1,274.3 457.7,276.2 458.7,277.9 459.9,279.4 461.3,280.7 461.0,282.6 461.3,284.5 461.7,286.4 461.0,288.3 461.5,290.2 461.0,292.1 461.3,294.0 460.1,295.7 459.9,297.8 459.1,299.7 457.8,301.4 457.3,303.4 457.1,305.5 456.0,307.3 457.1,309.1 457.9,311.0 457.9,313.2 458.7,315.1 460.1,316.7 460.2,318.9 461.3,320.7 462.0,322.5 463.4,323.8 464.9,325.1 465.8,326.8 467.3,328.0 468.6,329.5 469.3,331.3 469.0,333.3 469.5,335.3 469.8,337.3 469.5,339.3 470.2,341.3 469.9,343.3 470.2,345.3 470.7,347.3 470.2,349.4 469.3,351.4 468.4,353.4 467.6,355.4 466.4,357.3 465.9,359.4 464.9,361.3 464.0,363.3 464.1,365.1 462.9,366.6 463.2,368.4 462.7,370.0 461.3,369.0 460.1,367.9 458.9,366.6 457.3,366.0 456.2,364.4 455.6,362.5 454.1,361.2 453.1,359.6 452.0,358.0 450.0,357.3 447.8,357.2 446.0,356.0 444.0,355.3 444.3,357.3 444.5,359.3 443.7,361.3 444.0,363.3 442.4,364.7 440.4,365.6 438.5,366.4 436.8,367.7 435.2,369.0 433.3,370.0 431.3,370.6 429.3,371.3 427.2,371.7 425.4,373.1 423.3,373.2 421.4,374.2 419.4,374.9 417.3,375.3 415.6,376.2 414.3,377.6 412.7,378.7 411.1,379.6 409.5,380.7 408.3,382.2 406.7,383.3 405.0,384.2 403.3,385.3 401.7,386.3 399.9,387.1 398.4,388.3 396.6,389.3 395.0,390.3 393.3,391.3 391.4,391.5 389.7,392.4 387.9,392.9 386.1,393.5 384.6,394.9 382.7,395.3 380.7,395.9 378.5,396.2 376.6,397.0 374.8,398.4 372.8,399.1 370.7,399.4 368.9,400.5 366.7,400.7 365.9,402.5 365.1,404.2 363.5,405.6 362.7,407.3 361.2,406.2 359.7,405.3 357.7,405.2 356.4,403.9 354.7,403.3 355.4,405.4 356.8,407.1 357.0,409.5 357.8,411.5 359.4,413.2 360.0,415.3 361.2,416.8 363.1,417.5 364.6,418.7 365.8,420.3 367.4,421.3 369.4,421.9 370.7,423.3 371.4,425.3 372.0,427.3 372.8,429.2 373.3,431.3 372.2,433.2 370.8,434.8 369.1,436.2 368.0,438.0 369.4,439.5 369.9,441.5 370.9,443.1 372.3,444.6 372.9,446.5 373.6,448.4 374.7,450.0 375.7,451.7 377.1,453.1 377.2,455.3 378.4,456.8 379.3,458.6 381.1,459.8 381.9,461.5 382.7,463.3 384.9,463.7 386.6,465.3 388.8,465.6 390.7,466.7 392.2,468.0 393.1,469.7 393.8,471.5 395.0,473.0 396.6,474.1 397.9,475.6 398.7,477.3 399.9,479.0 401.6,480.0 403.0,481.5 404.9,482.3 406.4,483.6 407.4,485.5 409.1,486.6 410.8,487.6 412.0,489.3 413.5,490.8 415.5,491.7 417.2,492.9 419.4,493.4 420.7,495.2 422.7,496.0 423.5,497.6 423.0,499.4 423.7,501.0 424.0,502.7 425.7,503.9 427.1,505.4 428.3,507.1 430.4,507.8 432.0,509.1 433.3,510.7 435.1,511.4 437.0,511.8 438.8,512.3 440.6,513.0 442.4,513.6 444.0,514.7 445.9,513.9 447.9,513.5 449.9,513.0 452.1,513.0 453.9,512.0 456.0,511.7 457.9,510.9 460.0,510.7 461.2,509.2 462.3,507.6 463.8,506.5 464.9,505.0 466.8,504.2 468.0,502.7 469.3,501.3 469.3,499.2 470.0,497.1 470.9,495.1 470.4,492.9 471.6,490.9 471.5,488.8 472.0,486.7 474.1,487.1 476.1,487.8 478.3,487.7 480.4,488.2 482.5,488.8 484.5,489.5 486.7,489.3 488.8,489.8 490.6,491.0 492.6,491.5 494.7,492.1 496.7,492.6 498.8,493.2 500.9,493.6 502.7,494.7 504.6,495.4 506.3,496.3 507.6,497.9 509.5,498.5 511.2,499.4 512.9,500.3 514.1,502.0 516.0,502.7 517.9,503.5 520.0,503.8 522.1,503.8 524.1,504.2 526.0,504.6 528.0,505.3 529.7,504.3 531.2,503.0 533.0,502.2 534.7,501.3 536.9,501.6 538.7,502.9 540.8,503.5 543.0,503.6 545.2,503.9 547.1,505.2 549.3,505.3 549.5,507.4 549.5,509.5 549.8,511.6 549.4,513.7 549.3,515.8 549.3,517.9 549.3,520.0 549.2,521.9 548.4,523.6 548.5,525.5 547.8,527.2 547.6,529.0 546.7,530.7 547.8,532.5 549.1,534.1 550.2,535.9 550.9,537.9 552.0,539.7 552.6,541.7 553.7,543.5 554.7,545.3 555.0,547.3 555.6,549.1 556.0,551.0 556.4,552.9 557.3,554.7 557.2,556.8 557.1,558.8 556.2,560.8 556.9,562.9 556.1,564.9 556.0,566.9 556.0,569.0 170.4,569.0 170.0,566.9 171.0,564.9 171.2,562.8 171.0,560.7 171.3,558.7 171.5,556.6 170.9,554.5 171.4,552.5 171.5,550.4 172.0,548.5 172.9,546.8 173.4,544.9 173.9,543.0 174.2,541.1 175.1,539.3 175.4,537.4 175.7,535.5 176.3,533.4 176.2,531.2 176.4,529.0 176.9,526.9 177.5,524.8 177.7,522.6 178.9,520.6 178.9,518.4 179.8,516.6 180.6,514.7 181.4,512.9 182.3,511.0 182.9,509.1 183.2,507.0 184.8,505.5 185.3,503.5 186.7,502.1 187.7,500.3 188.9,498.7 190.2,497.2 190.9,495.2 192.7,494.1 193.5,492.1 194.9,490.7 193.1,490.5 191.5,489.6 190.1,488.4 188.2,488.3 186.7,487.3 184.8,486.7 183.0,486.0 181.0,486.2 179.0,485.9 177.1,485.5 175.3,484.9 173.3,484.7 171.5,483.7 169.5,483.0 167.7,482.2 165.5,482.0 163.7,481.2 161.8,480.3 160.0,479.3 158.3,478.6 156.4,478.6 154.7,477.9 152.7,478.1 151.0,477.6 149.3,476.7 147.3,477.0 145.3,476.5 143.3,476.5 141.3,476.5 139.3,476.9 137.3,476.7 136.4,474.7 135.5,472.7 134.6,470.7 133.4,468.9 133.3,466.5 132.0,464.7 130.4,463.6 129.7,461.6 128.4,460.3 126.3,459.7 125.3,458.0 124.3,456.4 122.7,455.3 123.9,453.5 124.0,451.3 124.4,449.2 125.0,447.2 126.5,445.5 126.4,443.2 127.4,441.3 128.0,439.3 126.4,438.2 125.4,436.6 124.4,434.9 122.4,434.3 121.6,432.4 120.0,431.3 118.9,429.5 118.1,427.5 116.8,425.9 115.3,424.4 114.8,422.2 113.3,420.7 113.6,418.6 113.3,416.4 113.6,414.2 114.4,412.1 114.7,410.0 116.0,408.6 117.2,407.2 118.4,405.7 119.9,404.5 121.2,403.2 122.7,402.0 122.8,399.8 121.6,397.8 122.1,395.5 121.9,393.4 121.3,391.3 119.4,390.1 118.4,388.0 116.7,386.7 115.2,385.1 113.3,384.0 111.9,382.8 110.7,381.3 109.4,379.9 108.7,378.0 107.0,377.0 107.5,375.0 107.6,373.0 108.0,371.0 108.5,369.0 107.4,367.3 106.4,365.7 105.6,363.9 105.5,361.8 104.1,360.3 104.0,358.3 102.7,356.7 103.4,354.9 104.4,353.1 105.5,351.6 106.2,349.7 107.3,348.1 108.8,346.7 109.3,344.7 110.6,342.9 111.4,340.8 112.1,338.8 113.3,336.9 114.2,334.9 114.7,332.7 114.5,330.7 114.5,328.7 113.5,326.8 114.0,324.7 113.5,322.7 113.3,320.7 112.5,318.9 111.4,317.3 110.1,315.8 108.9,314.3 108.7,312.1 106.9,310.9 106.3,309.0 105.3,307.3 106.8,305.8 108.4,304.5 110.3,303.5 112.0,302.4 113.3,300.7 115.3,300.7 117.3,301.3 119.3,301.1 121.3,301.6 123.3,301.7 125.3,302.0 127.1,300.7 129.0,299.8 130.9,298.8 133.2,298.6 134.9,297.2 136.6,296.0 138.7,295.3 138.8,293.2 138.5,291.2 137.6,289.3 137.3,287.3 138.8,285.7 140.5,284.4 142.2,283.0 144.1,281.8 145.6,280.3 147.4,279.1 149.3,278.0 149.0,275.9 149.4,273.7 149.7,271.6 149.6,269.4 149.3,267.3 147.3,266.7 145.3,266.1 143.3,265.3 141.3,264.8 139.2,264.1 137.3,263.3 136.5,261.4 136.4,259.3 136.8,257.2 136.0,255.3 137.9,254.2 140.0,254.0 142.0,253.4 144.1,253.0 145.9,251.7 148.0,251.3 148.1,249.3 148.4,247.3 148.9,245.3 149.3,243.3 150.2,241.9 151.5,240.9 152.0,239.3 153.0,237.4 153.7,235.4 153.5,233.1 154.7,231.3 154.9,229.1 156.2,227.4 157.1,225.4 157.3,223.3 157.1,221.4 157.0,219.5 156.2,217.7 156.4,215.7 156.8,213.8 156.5,211.9 156.0,210.0 155.0,208.4 153.7,206.9 151.8,206.1 150.7,204.5 149.4,203.2 148.6,201.7 148.0,200.0 148.5,198.4 149.1,196.9 149.3,195.3 148.0,193.5 146.2,192.2 144.5,190.8 142.7,189.5 144.7,188.9 146.3,187.7 148.2,186.9 150.0,186.0 151.6,185.0 153.6,185.2 155.1,184.1 157.1,184.3 158.7,183.3 160.7,183.0 162.7,182.2 164.6,181.6 166.7,181.5 168.6,180.9 170.5,181.0 172.4,180.8 174.2,179.8 176.1,179.5 178.1,179.6 180.0,179.3 181.7,179.6 183.5,179.5 185.3,179.5 187.0,180.0 188.5,180.7 190.3,180.7 191.8,181.7 193.3,182.5 193.3,184.2 193.3,186.0 192.1,187.3 191.8,188.9 190.8,190.3 190.5,192.0 190.7,193.7 191.1,195.3 191.0,197.0 192.5,198.3 193.3,200.3 195.0,201.5 197.0,201.5 199.0,201.0 199.6,199.0 200.0,197.0 201.3,195.3 200.6,193.7 200.2,191.9 199.3,190.4 198.7,188.7 200.8,188.1 203.0,188.0 204.6,189.3 206.1,190.6 208.0,191.3 208.7,192.8 209.4,194.3 209.3,196.0 209.6,194.9 210.3,194.0 209.7,192.2 209.5,190.3 208.6,188.7 208.4,186.8 209.3,184.7 209.7,182.6 210.0,180.4 210.8,178.8 211.3,177.1 212.9,175.8 213.2,174.0 215.1,173.0 217.2,172.4 218.7,173.3 220.5,173.2 222.0,174.0 223.8,174.1 225.4,175.0 227.3,174.9 229.0,175.5 230.7,176.5 232.6,176.5 234.5,176.7 236.3,177.2 238.0,178.0 239.6,178.9 241.1,180.2 242.5,181.4 244.6,181.7 246.0,183.0 247.6,184.4 249.2,185.8 250.1,187.9 252.0,189.0 253.6,190.4 255.1,192.0 256.0,194.0 257.5,192.5 256.0,191.3 255.2,189.6 254.5,187.7 253.0,186.5 251.9,185.0 250.4,183.9 249.2,182.5 247.7,181.3 246.0,180.5 244.3,179.7 242.6,178.8 241.5,177.1 239.7,176.3 238.0,175.5 236.3,175.2 235.1,173.8 233.4,173.4 232.0,172.5 230.0,172.0 227.9,171.3 226.0,170.5 226.2,168.7 226.6,166.9 227.5,165.3 228.3,163.7 227.8,162.2 228.1,160.5 227.3,159.1 225.5,158.2 224.6,156.2 222.7,155.3 223.4,153.9 224.4,152.7 225.5,151.6 225.2,149.6 224.6,147.8 223.6,146.0 221.5,145.9 219.4,146.1 217.4,145.5 215.3,145.4 213.3,145.1 213.3,143.1 212.4,141.3 214.1,140.1 216.1,139.3 218.0,138.5 219.9,138.6 221.6,137.3 223.6,137.3 225.5,137.4 227.3,136.7 228.5,135.5 229.2,133.9 227.6,132.5 226.4,130.9 225.3,129.2 224.5,127.3 223.7,125.4 222.0,124.3 221.0,122.5 220.2,120.8 219.4,119.3 218.0,118.0 217.1,116.1 216.3,114.1 215.8,112.0 215.8,110.2 214.9,108.8" fill="#f5eca8"/>
<polygon points="422.7,496.0 423.0,504.0 422.7,512.0 418.0,514.5 409.3,517.3 406.5,523.0 404.0,530.7 396.0,535.0 385.3,538.7 381.3,544.0 384.0,551.0 389.0,558.0 392.0,569.0 392.0,580.0 600.0,580.0 600.0,480.0 422.7,480.0" fill="#ebe093" clip-path="url(#landclip)"/>
<polygon points="203.6,100.0 204.6,100.6 202.2,105.0 201.0,110.5 201.8,117.0 202.0,123.5 200.6,123.6 199.9,116.0 199.6,110.0 201.0,104.0" fill="#f5eca8"/>
<polygon points="205.9,116.0 209.0,115.0 213.3,116.5 212.5,120.3 208.0,121.0 205.8,119.0" fill="#f5eca8"/>
<polygon points="201.5,120.5 203.8,121.0 204.0,125.0 202.0,125.5" fill="#f5eca8"/>
<polygon points="212.4,128.5 216.0,128.0 218.0,130.5 216.5,133.0 213.0,132.5" fill="#f5eca8"/>
<polygon points="220.8,131.5 224.5,131.0 226.4,133.5 224.0,135.7 221.0,135.0" fill="#f5eca8"/>
<polygon points="206.0,127.5 208.5,127.5 208.5,129.5 206.0,129.5" fill="#f5eca8"/>
<polygon points="207.0,132.0 209.0,132.0 209.0,136.0 207.0,136.0" fill="#f5eca8"/>
<polygon points="214.5,122.0 217.0,121.5 217.5,124.5 215.0,125.0" fill="#f5eca8"/>
<polygon points="309.5,132.9 314.1,130.1 320.7,133.9 322.5,138.5 316.9,139.5 311.5,137.0" fill="#f5eca8"/>
<polygon points="143.5,186.0 147.0,184.5 147.5,186.0 144.0,187.5" fill="#bdb78e"/>
<polygon points="149.0,183.6 154.0,182.0 154.3,183.3 149.5,185.0" fill="#bdb78e"/>
<polygon points="156.0,181.3 162.0,180.0 162.3,181.2 156.4,182.6" fill="#bdb78e"/>
<polygon points="164.0,179.6 170.0,178.6 170.3,179.8 164.3,180.9" fill="#bdb78e"/>
<polygon points="172.0,178.2 178.0,177.4 178.2,178.6 172.3,179.5" fill="#bdb78e"/>
<polygon points="180.0,177.2 186.0,177.2 186.0,178.4 180.2,178.5" fill="#bdb78e"/>
<polygon points="206.0,166.0 208.5,165.5 208.5,168.0 206.3,168.2" fill="#f5eca8"/>
<polygon points="428.0,160.0 432.0,162.5 436.0,167.0 433.0,167.5 429.0,164.0" fill="#f5eca8"/>
<polyline points="209.6,195.5 208.9,201 209.1,206.5" fill="none" stroke="#55534a" stroke-width="0.9"/>
<polygon points="392.5,133.0 393.6,132.3 394.8,132.0 396.0,131.5 397.1,132.4 397.9,133.6 399.0,134.5 398.4,135.6 398.3,137.0 397.5,138.0 399.0,139.0 400.0,140.5 398.4,140.7 397.0,141.5 395.7,140.6 394.5,139.7 393.5,138.5 393.6,137.1 393.0,135.8 393.0,134.3" fill="#404040"/>
<polygon points="399.5,128.5 400.9,127.8 402.5,127.5 403.0,128.7 403.6,129.8 404.0,131.0 402.7,131.9 401.5,133.0 400.7,131.9 399.8,131.0 399.3,129.8" fill="#404040"/>
<polygon points="420.5,158.5 422.1,159.1 423.5,160.0 424.3,161.3 425.3,162.4 426.1,163.8 427.0,165.0 428.1,166.2 429.6,167.1 430.5,168.5 429.7,169.3 428.5,169.5 427.5,168.4 426.1,167.9 425.0,167.0 424.0,166.0 423.3,164.4 422.0,163.3 421.0,162.0 421.0,160.2" fill="#404040"/>
<polygon points="428.0,173.0 429.6,172.6 431.3,172.7 433.0,172.5 434.5,173.2 436.0,174.1 437.5,174.8 439.0,175.5 440.0,176.7 440.7,178.0 441.0,179.5 439.4,178.9 437.6,179.0 436.0,178.5 434.4,178.2 433.1,177.1 431.5,177.0 430.0,176.5 429.6,175.2 428.7,174.2" fill="#404040"/>
<polygon points="367.0,141.0 368.3,140.3 369.7,140.0 371.0,139.5 372.1,140.4 373.0,141.5 371.6,142.1 370.3,142.7 369.0,143.5 367.7,142.5" fill="#404040"/>
<polygon points="380.0,139.5 381.5,139.2 383.0,139.3 384.5,139.0 386.0,139.0 386.4,140.0 387.0,141.0 385.5,141.1 384.0,141.7 382.6,142.0 381.0,141.8 380.7,140.5" fill="#404040"/>
<g fill="none" stroke="#a49b62" stroke-width="0.7" stroke-linejoin="round">
<polyline points="256.0,190.0 257.7,188.8 259.5,187.8 261.5,186.9 263.0,185.5 264.9,184.9 266.9,184.4 268.8,183.9 270.7,183.3 272.2,184.4 273.4,186.0 274.7,187.3 274.4,189.5 274.0,191.7 274.0,194.0 273.7,195.9 272.8,197.6 272.0,199.3 270.1,200.3 267.9,200.4 265.9,201.2 264.0,202.0 261.9,200.5 260.8,198.2 258.7,196.7 258.2,194.3 257.0,192.2 256.0,190.0"/>
<polyline points="206.7,214.0 208.7,213.6 210.7,213.2 211.9,214.9 213.3,216.5 214.7,218.0 216.7,217.6 218.7,217.3 220.7,217.5 222.7,217.5 224.2,219.3 225.1,221.5 226.7,223.3 225.2,225.0 224.0,226.8 222.7,228.7 220.5,228.4 218.2,228.2 216.0,228.1 214.4,226.2 213.3,224.1 212.0,222.0 210.5,220.9 209.6,219.1 208.0,218.0 207.0,216.1 206.7,214.0"/>
<polyline points="272.0,199.3 274.4,200.1 276.6,201.5 278.9,202.5 281.3,203.3 283.4,203.9 285.6,203.6 287.8,203.9 289.9,204.1 292.0,204.7 294.1,205.5 295.9,206.9 298.1,207.4 300.0,208.7 301.8,209.7 303.8,210.5 305.6,211.5 307.3,212.7 309.2,213.8 311.0,215.2 313.0,216.2 315.2,216.9 317.0,218.2 318.9,219.3 320.7,220.7"/>
<polyline points="300.7,168.7 300.4,171.1 299.2,173.3 298.5,175.6 298.0,178.0 299.0,180.2 300.8,181.9 302.2,183.9 303.3,186.0 302.4,188.3 301.9,190.6 301.5,193.0 300.7,195.3 299.2,196.8 298.1,198.6 296.5,199.9 295.6,201.9 294.0,203.3 292.0,204.7"/>
<polyline points="320.7,220.7 323.2,220.1 325.2,218.3 327.8,217.9 330.0,216.7 332.1,215.2 334.7,214.7 336.5,212.7 339.1,212.2 341.2,210.9 343.5,209.9 345.8,208.8 347.7,207.0 350.0,206.0 352.3,206.3 354.4,207.1 356.7,207.3 358.9,207.6 361.0,208.2 363.1,208.7 365.1,209.8 367.3,210.0 369.0,211.4 370.9,212.4 373.1,213.0 374.6,214.6 376.7,215.3 379.2,214.9 381.6,214.3 384.1,214.1 386.6,213.7 389.0,213.1 391.5,213.1 394.0,212.7 395.9,211.7 398.0,211.0 400.2,210.4 402.1,209.2 404.0,208.1 406.0,207.3 408.0,205.6 409.8,203.8 411.1,201.6 413.2,200.0 414.2,197.5 416.0,195.7 418.0,194.0 420.2,193.9 422.4,194.8 424.6,194.8 426.8,195.1 429.1,194.9 431.3,195.3 433.0,196.6 434.4,198.3 436.6,199.1 438.0,200.7 438.0,202.8 437.8,204.8 437.1,206.7 436.7,208.7 439.1,208.3 441.4,207.4 443.7,206.6 446.0,206.0"/>
<polyline points="320.7,220.7 322.6,221.7 324.4,222.8 326.3,223.8 328.2,224.9 330.0,226.0 332.0,227.1 333.9,228.4 336.1,229.3 337.9,230.8 340.2,231.4 342.1,232.8 344.1,234.0 346.0,235.3 348.3,235.5 350.5,236.6 352.8,236.8 355.0,237.7 357.3,238.0 357.7,240.3 359.1,242.2 359.4,244.5 360.2,246.7 361.3,248.7 359.4,250.4 358.1,252.5 356.0,254.0 357.4,256.1 358.6,258.3 360.2,260.3 361.6,262.4 362.7,264.7 362.5,267.0 362.1,269.3 361.3,271.5 361.3,273.9 360.8,276.1 360.3,278.4 360.0,280.7 361.3,282.5 363.2,283.7 364.9,285.1 365.9,287.2 367.5,288.7 369.3,290.0 371.4,290.5 373.6,290.5 375.7,290.5 377.9,290.7 380.0,291.3 382.0,292.5 383.8,294.0 385.9,295.0 387.5,296.8 389.4,298.2 391.7,299.0 393.3,300.7 394.4,302.5 396.0,304.0 397.1,305.9 398.7,307.3 397.0,309.0 395.2,310.5 393.7,312.4 392.0,314.0"/>
<polyline points="320.7,220.7 319.3,222.8 317.6,224.7 316.1,226.7 315.1,229.1 313.4,231.0 312.0,233.1 310.7,235.3 308.5,236.3 306.6,237.8 304.5,238.9 302.2,239.7 300.0,240.7 299.8,243.0 300.2,245.3 300.0,247.7 300.0,250.0 301.5,252.1 302.4,254.4 303.7,256.6 305.4,258.5 306.7,260.7 305.9,262.6 306.4,264.8 305.4,266.7 305.3,268.7 305.8,270.9 307.2,272.8 307.5,275.1 308.5,277.2 309.3,279.3 307.6,281.1 306.9,283.4 305.3,285.3 304.0,287.3 301.8,288.1 299.9,289.4 298.1,290.8 296.2,292.1 293.8,292.5 292.0,294.0 292.0,296.3 291.6,298.6 292.3,301.0 292.0,303.3 292.5,305.8 293.3,308.2 294.0,310.6 295.6,312.8 296.0,315.3 297.9,316.5 300.0,317.7 301.4,319.5 303.5,320.6 305.3,322.0 305.9,324.2 307.4,325.9 308.1,328.1 309.3,330.0 311.2,331.2 313.4,331.6 315.3,332.7 317.1,333.9 319.3,334.4 321.3,335.3 322.3,337.2 323.3,339.2 323.8,341.4 325.2,343.2 325.7,345.3 326.7,347.3 328.9,348.0 331.1,348.7 333.4,349.0 335.5,350.1 337.7,351.0 340.0,351.3 342.5,351.1 344.9,351.1 347.4,351.7 349.9,351.4 352.4,351.1 354.8,350.9 357.3,351.3"/>
<polyline points="296.0,315.3 294.1,316.7 291.9,317.4 290.1,318.8 288.1,320.0 286.0,320.9 284.0,322.0 281.9,323.1 279.7,324.1 277.6,325.2 275.5,326.4 273.3,327.3 271.4,328.2 269.2,328.5 267.4,329.5 265.3,330.0 263.0,329.8 260.6,329.7 258.3,329.7 256.0,330.0 256.1,327.8 255.2,325.7 255.0,323.6 255.2,321.4 254.7,319.3 252.7,318.9 250.7,318.9 248.7,318.2 246.7,318.0 246.8,315.6 246.4,313.2 245.6,310.8 245.4,308.4 245.3,306.0 243.3,304.3 242.3,301.7 240.2,300.2 238.7,298.0 237.5,295.7 236.1,293.5 234.8,291.3 233.4,289.1 232.3,286.8 230.7,284.7 230.1,282.3 229.2,280.0 228.3,277.7 228.0,275.3 229.3,273.5 231.0,272.0 232.0,270.0 231.0,268.1 230.8,265.9 230.1,264.0 229.3,262.0 228.2,264.0 226.8,265.7 225.3,267.3 223.0,266.5 220.6,266.1 218.3,265.4 216.0,264.7 214.7,263.4 213.1,262.3 212.0,260.7 209.8,261.6 207.7,262.7 205.6,263.9 203.5,265.1 201.3,266.0 201.7,268.4 202.4,270.7 203.3,273.0 204.0,275.3 204.4,277.6 204.3,280.0 204.3,282.4 204.0,284.7 201.9,285.9 199.5,286.3 197.3,287.3 195.0,287.6 192.7,288.3 190.3,288.0 188.0,288.7 187.1,286.6 186.2,284.6 185.3,282.6 184.0,280.7 183.8,278.7 183.4,276.7 183.5,274.6 182.7,272.7 180.8,271.6 179.5,269.9 177.9,268.4 176.0,267.3 174.0,266.0 172.0,264.7 171.1,266.6 170.7,268.7 168.7,270.0 166.5,270.9 164.4,272.1 162.2,273.0 159.9,273.8 158.0,275.3 155.8,276.3 153.4,276.9 151.5,278.4 149.3,279.3"/>
<polyline points="392.0,314.0 389.5,314.3 387.1,314.6 384.6,315.3 382.2,315.8 379.8,316.3 377.3,316.7 375.0,316.7 372.9,317.8 370.7,318.3 368.5,318.6 366.3,319.1 364.0,319.3 362.4,320.8 360.8,322.2 359.2,323.6 357.3,324.7 357.7,327.2 357.9,329.6 357.8,332.1 358.4,334.6 358.7,337.0 358.8,339.5 358.7,342.0 358.3,344.3 358.1,346.7 357.4,348.9 357.3,351.3 359.0,352.0 360.9,352.2 362.7,352.7 364.9,353.7 366.6,355.5 368.6,356.9 370.7,358.0 372.1,359.3 373.3,360.8 374.7,362.0 373.1,363.7 371.0,364.8 369.4,366.4 367.7,367.9 365.9,369.3 364.6,371.4 362.7,372.7 360.8,374.3 358.8,375.7 356.9,377.3 355.2,379.2 353.3,380.7 351.5,382.3 349.3,383.3 348.8,385.5 348.8,387.8 348.0,390.0 348.8,391.8 350.4,393.3 351.0,395.2 352.0,397.0 353.0,399.0 354.3,400.8 355.0,403.0"/>
<polyline points="392.0,314.0 393.1,315.6 394.5,316.8 396.0,318.0 396.7,320.1 397.4,322.1 398.8,323.9 399.4,326.0 400.1,328.1 401.3,330.0 403.2,329.9 404.9,329.2 406.7,328.7 408.9,329.2 411.0,330.2 412.9,331.5 415.3,331.6 417.3,332.7 419.5,332.3 421.8,332.6 424.0,332.0 426.2,331.5 428.4,331.4 430.7,331.3 432.3,329.7 433.2,327.5 434.6,325.7 436.1,323.9 437.3,322.0 439.7,322.0 442.1,321.5 444.5,320.8 446.9,321.0 449.3,320.7 451.6,319.8 454.0,319.3 456.4,318.8 458.9,318.7 461.3,318.0"/>
<polyline points="256.0,330.0 254.7,328.7 252.2,328.3 249.8,327.2 247.4,326.6 244.9,326.1 242.4,325.6 240.0,324.7 237.5,324.9 235.1,325.3 232.6,326.0 230.2,326.4 227.8,327.1 225.3,327.3 225.7,329.2 225.4,331.1 225.3,333.0"/>
<polyline points="197.3,367.3 196.6,369.4 197.1,371.6 196.9,373.8 195.8,375.8 196.0,378.0 194.5,379.5 192.9,380.9 190.9,381.9 189.3,383.3 190.7,384.6 192.0,386.0 191.1,388.1 191.2,390.3 190.0,392.3 190.0,394.6 189.3,396.7 189.5,398.8 189.5,401.0 190.0,403.1 190.0,405.2 190.7,407.3 189.2,408.9 188.3,410.9 186.4,412.1 185.3,414.0 184.4,415.7 183.7,417.6 182.7,419.3 184.3,420.9 185.1,423.1 186.7,424.7 188.8,424.5 191.0,424.5 193.1,424.1 195.2,424.0 197.3,423.3 198.9,425.0 200.5,426.8 202.3,428.4 204.0,430.0 204.9,432.3 205.0,434.8 206.2,436.9 206.7,439.3 206.1,441.3 205.6,443.2 205.5,445.3 205.3,447.3 206.7,449.3 207.2,451.7 208.4,453.8 209.9,455.7 210.7,458.0 211.1,460.1 210.7,462.3 211.1,464.4 210.3,466.6 210.7,468.7 209.8,470.9 208.9,473.1 208.1,475.4 207.0,477.5 205.9,479.6 205.3,482.0 203.8,483.7 202.2,485.3 200.4,486.7 199.0,488.5 197.3,490.0"/>
<polyline points="174.7,368.7 172.6,369.8 170.8,371.2 169.0,372.7 167.6,374.6 165.5,375.7 163.7,377.2 161.8,378.6 160.0,380.0 158.5,381.8 156.7,383.3 154.7,384.7 152.6,386.1 150.5,387.6 148.2,388.7 146.2,390.4 144.0,391.6 141.6,392.5 139.5,394.0 137.3,395.3 134.9,396.2 132.4,396.9 130.0,398.1 127.7,399.3 125.0,399.6 122.7,400.7"/>
<polyline points="204.0,430.0 206.2,428.8 208.4,427.6 210.1,425.8 212.6,425.1 214.4,423.1 216.7,422.2 218.7,420.7 220.7,419.6 223.0,419.3 224.9,418.0 227.2,417.7 229.3,416.7 229.5,419.1 229.8,421.4 230.4,423.7 230.7,426.0 230.8,428.3 231.1,430.5 232.3,432.6 232.4,434.9 232.5,437.2 233.3,439.3 233.4,441.7 234.0,444.0 234.5,446.3 234.7,448.7 236.8,447.7 238.2,445.7 240.4,444.9 242.3,443.6 244.0,442.0 245.9,440.8 247.9,440.1 249.9,439.2 252.0,438.5 254.0,437.5 256.0,436.7 257.1,438.7 258.4,440.5 260.1,441.9 261.0,444.0 263.0,445.3 264.0,447.3 265.6,448.9 266.5,451.0 267.8,452.8 269.1,454.6 270.3,456.5 272.0,458.0 272.6,460.4 274.0,462.6 274.4,465.1 275.2,467.5 276.8,469.5 277.3,472.0 278.6,474.0 280.2,475.8 281.6,477.8 282.7,480.0 283.9,482.1 285.0,484.2 286.9,485.8 288.0,488.0 288.4,490.2 288.5,492.5 289.1,494.7 289.8,496.9 290.5,499.0 290.7,501.3 289.5,503.2 288.6,505.2 287.2,507.0 286.0,508.9 285.1,510.9 283.6,512.6 282.7,514.7 281.2,516.7 279.7,518.5 277.9,520.2 276.8,522.4 275.3,524.4 273.5,526.1 272.0,528.0 272.8,530.3 273.2,532.8 274.4,535.0 275.1,537.4 276.1,539.7 276.5,542.2 277.4,544.5 278.0,546.9 278.7,549.3 278.1,551.6 278.4,554.0 277.3,556.2 277.2,558.6 276.7,560.9 276.6,563.3 276.3,565.7 276.0,568.0"/>
<polyline points="229.3,416.7 231.7,416.1 234.1,416.2 236.5,415.7 238.8,414.7 241.3,414.8 243.6,414.2 245.9,413.2 248.4,413.5 250.7,412.7 251.8,410.6 253.2,408.6 254.6,406.7 256.0,404.7 257.8,403.4 259.4,401.8 261.5,400.8 263.3,399.6 264.9,398.0 266.7,396.7 268.0,394.7 268.9,392.5 270.1,390.4 270.7,388.0 272.0,386.0 270.6,384.1 269.3,382.0 267.7,380.2 266.7,378.0 268.3,376.8 269.4,375.1 270.4,373.3 272.0,372.0 273.7,370.6 275.3,368.9 276.8,367.3 278.7,366.0 279.8,363.8 281.3,362.0 282.4,359.8 284.0,358.0 286.0,357.1 288.0,356.0 289.8,354.7 292.2,354.3 293.8,352.6 296.0,352.0 298.1,350.6 300.6,349.9 302.5,348.3 304.8,347.3 307.1,346.2 309.3,345.0 311.8,345.3 314.3,345.7 316.8,346.0 319.2,346.3 321.8,346.2 324.2,347.3 326.7,347.3"/>
<polyline points="234.7,448.7 233.0,450.3 231.8,452.3 230.3,454.0 228.5,455.5 227.4,457.5 225.3,458.8 224.0,460.7 223.6,458.3 222.3,456.2 222.1,453.8 221.3,451.5 219.5,452.5 217.6,453.4 215.6,454.1 214.0,455.5 212.3,455.3 210.7,456.0"/>
<polyline points="122.7,455.3 124.9,454.6 127.0,453.9 129.2,453.3 131.1,451.8 133.3,451.3 135.7,450.5 138.3,450.8 140.7,450.0 143.2,449.7 145.8,449.7 148.2,448.8 150.7,448.7 152.9,450.0 155.4,450.7 157.8,451.3 160.0,452.7 160.2,454.9 161.0,457.0 162.0,459.0 161.9,461.3 162.7,463.3 163.5,465.4 164.5,467.4 165.6,469.4 166.7,471.3 164.6,472.8 163.4,475.2 161.3,476.7"/>
<polyline points="256.0,404.7 258.3,403.9 260.6,403.5 263.0,403.4 265.3,402.6 267.6,402.1 270.0,402.0 272.5,401.3 275.0,400.6 277.4,399.8 280.0,399.2 282.6,399.0 285.0,398.0 287.5,398.0 290.0,398.4 292.6,398.6 295.0,399.1 297.5,399.3 300.0,400.0 302.2,399.4 303.9,397.9 306.2,397.4 307.9,395.7 310.2,395.3 312.0,394.0 314.0,394.6 316.0,395.4 318.0,395.9 320.1,396.2 322.0,397.0 324.1,395.6 326.4,394.8 328.3,393.2 330.5,391.9 332.9,391.4 335.0,390.0 337.2,390.1 339.3,389.8 341.5,390.0 343.7,390.4 345.8,389.8 348.0,390.0"/>
<polyline points="207.0,568.5 208.3,567.0 209.5,565.5 211.2,564.9 213.0,564.5 214.4,565.5 216.0,566.0 216.9,567.2 217.5,568.5"/>
<polyline points="396.0,254.0 398.0,252.7 400.0,251.3 402.0,250.8 403.9,250.2 406.0,250.5 408.0,250.0 409.2,251.5 410.2,253.2 411.1,255.0 412.0,256.7 413.2,258.4 414.3,260.3 416.0,261.6 417.3,263.3 417.6,265.4 418.7,267.3 417.0,268.3 416.0,270.0 413.9,269.5 411.9,269.0 409.9,268.3 408.0,267.3 405.8,266.6 403.6,266.3 401.3,266.0 399.8,264.0 398.1,262.2 396.0,260.7 396.1,258.5 396.0,256.2 396.0,254.0"/>
<polyline points="520.0,534.7 521.6,533.4 523.4,532.6 525.3,532.0 527.3,532.9 529.2,534.1 531.4,534.7 533.3,536.0 534.1,538.2 534.5,540.4 534.7,542.7 532.8,542.9 531.2,543.9 529.3,544.0 527.3,543.5 525.3,543.2 523.2,543.3 521.3,542.7 521.0,540.7 520.6,538.7 520.2,536.7 520.0,534.7"/>
<polyline points="422.7,512.0 425.0,512.3 427.2,513.1 429.4,513.8 431.5,515.0 433.8,515.3 436.0,516.0 438.4,516.2 440.8,515.6 443.2,516.0 445.6,516.3 448.0,516.0 450.4,515.2 452.9,514.8 455.3,513.9 457.6,512.7 460.0,512.0 461.7,513.3 462.5,515.3 464.3,516.6 465.7,518.1 466.7,520.0 467.0,522.2 467.4,524.4 468.0,526.5 468.4,528.7 469.3,530.7 467.6,532.5 465.8,534.2 463.9,535.8 461.6,536.8 460.0,538.7 457.7,539.4 455.4,539.7 453.1,540.1 450.7,540.0 450.8,542.4 450.6,544.8 450.0,547.2 449.9,549.6 449.3,552.0 450.8,553.9 451.7,556.2 453.6,557.8 454.4,560.2 455.8,562.1 457.3,564.0 458.6,566.0 460.0,568.0"/>
<polyline points="550.7,545.3 548.5,546.0 546.4,546.8 544.2,547.4 542.2,548.7 540.0,549.3 537.9,550.5 535.8,551.7 533.8,553.0 532.2,554.9 529.9,555.9 528.0,557.3 527.1,559.4 526.4,561.6 525.2,563.6 524.8,565.9 524.0,568.0"/>
<polyline points="381.3,544.0 383.4,545.2 385.5,546.4 387.5,547.7 389.5,548.9 391.6,550.0 394.0,550.8 396.0,552.0 397.8,553.7 400.0,554.6 402.1,555.8 404.0,557.3 403.7,559.4 402.6,561.3 402.3,563.4 401.3,565.3"/>
<polyline points="404.0,530.7 403.0,532.5 401.8,534.2 400.8,536.1 400.0,538.0 400.5,540.1 401.8,541.9 402.0,544.2 403.1,546.0 404.0,548.0 401.9,548.8 399.9,549.8 397.8,550.7 396.0,552.0"/>
<polyline points="422.7,496.0 422.9,498.0 422.4,500.0 422.5,502.0 423.0,504.0 422.5,506.0 422.6,508.0 422.4,510.0 422.7,512.0 421.3,513.2 419.5,513.6 418.0,514.5 415.9,515.4 413.6,515.7 411.5,516.7 409.3,517.3 408.3,519.2 407.4,521.1 406.5,523.0 405.8,524.9 405.0,526.8 404.2,528.6 404.0,530.7 402.1,531.9 399.9,532.6 397.8,533.6 396.0,535.0 393.9,535.8 391.8,536.8 389.6,537.2 387.4,537.7 385.3,538.7 383.9,540.5 382.9,542.4 381.3,544.0 382.0,546.4 383.2,548.6 384.0,551.0 385.0,553.0 386.7,554.3 387.7,556.3 389.0,558.0 389.7,560.2 389.8,562.5 391.1,564.5 391.1,566.9 392.0,569.0"/>
</g>
<rect x="212.8" y="196.4" width="3.2" height="3.2" fill="#12129c"/>
<rect x="248.3" y="202.3" width="3.2" height="3.2" fill="#12129c"/>
<rect x="265.6" y="196.4" width="3.2" height="3.2" fill="#12129c"/>
<rect x="224.5" y="278.4" width="3.2" height="3.2" fill="#12129c"/>
<rect x="212.9" y="290.3" width="3.2" height="3.2" fill="#12129c"/>
<rect x="277.2" y="284.4" width="3.2" height="3.2" fill="#12129c"/>
<rect x="166.0" y="325.5" width="3.2" height="3.2" fill="#12129c"/>
<rect x="154.7" y="331.3" width="3.2" height="3.2" fill="#12129c"/>
<rect x="130.9" y="343.1" width="3.2" height="3.2" fill="#12129c"/>
<rect x="142.7" y="360.7" width="3.2" height="3.2" fill="#12129c"/>
<rect x="207.2" y="431.1" width="3.2" height="3.2" fill="#12129c"/>
<rect x="224.7" y="442.5" width="3.2" height="3.2" fill="#12129c"/>
<rect x="213.1" y="448.4" width="3.2" height="3.2" fill="#12129c"/>
<rect x="207.1" y="454.4" width="3.2" height="3.2" fill="#12129c"/>
<rect x="248.3" y="536.3" width="3.2" height="3.2" fill="#12129c"/>
<rect x="324.3" y="530.4" width="3.2" height="3.2" fill="#12129c"/>
<rect x="523.7" y="536.3" width="3.2" height="3.2" fill="#12129c"/>
<rect x="529.6" y="530.4" width="3.2" height="3.2" fill="#12129c"/>
<rect x="412.4" y="225.4" width="3.2" height="3.2" fill="#12129c"/>
<rect x="406.4" y="260.9" width="3.2" height="3.2" fill="#12129c"/>
</svg></div>
<div class="a" style="left:456.8px;top:90.3px;width:90.5px;height:9.8px;background:#fff;border:1px solid #b9bdca;box-sizing:border-box;"></div>
<div class="t" style="left:459.6px;top:89.8px;font-size:7.41px;color:#111;">Europa [DE-AT-CH-FL]</div>
<div class="a" style="left:537.5px;top:91.0px;width:9.0px;height:8.4px;background:linear-gradient(#ececf1,#c9cad4);border:1px solid #a9abb8;box-sizing:border-box;border-radius:1px;"></div>
<svg style="left:539.1px;top:93.2px" width="6" height="4" viewBox="0 0 6 4"><path d="M0.8 0.6L3 3l2.2-2.4" fill="none" stroke="#2c3350" stroke-width="1.2"/></svg>
<div class="a" style="left:554.3px;top:90.3px;width:62.7px;height:9.8px;background:#fff;border:1px solid #b9bdca;box-sizing:border-box;"></div>
<div class="t" style="left:557.0px;top:89.8px;font-size:7.27px;color:#111;">Alle Einträge</div>
<div class="a" style="left:607.2px;top:91.0px;width:9.0px;height:8.4px;background:linear-gradient(#ececf1,#c9cad4);border:1px solid #a9abb8;box-sizing:border-box;border-radius:1px;"></div>
<svg style="left:608.8px;top:93.2px" width="6" height="4" viewBox="0 0 6 4"><path d="M0.8 0.6L3 3l2.2-2.4" fill="none" stroke="#2c3350" stroke-width="1.2"/></svg>
<div class="a" style="left:630.7px;top:90.0px;width:10.4px;height:478.0px;background:#f5f5f9;"></div>
<div class="a" style="left:631.8px;top:90.2px;width:9.5px;height:9.6px;background:linear-gradient(90deg,#f9f9fc,#d9dbe8);border:1px solid #b0b4c6;box-sizing:border-box;border-radius:1.5px;"></div>
<svg style="left:633.6px;top:93px" width="6" height="4" viewBox="0 0 6 4"><path d="M0.8 3.4L3 1l2.2 2.4" fill="none" stroke="#2c3350" stroke-width="1.3"/></svg>
<div class="a" style="left:630.9px;top:100.0px;width:9.8px;height:334.5px;background:linear-gradient(90deg,#f1f1f8,#e4e4ef 40%,#d3d4e4 90%,#c3c5d8);border:1px solid #c5c7d8;box-sizing:border-box;border-radius:1.5px;"></div>
<div class="a" style="left:634.5px;top:328.0px;width:4.0px;height:0.8px;background:#a9adc4;"></div>
<div class="a" style="left:634.5px;top:330.0px;width:4.0px;height:0.8px;background:#a9adc4;"></div>
<div class="a" style="left:634.5px;top:332.0px;width:4.0px;height:0.8px;background:#a9adc4;"></div>
<div class="a" style="left:634.5px;top:334.0px;width:4.0px;height:0.8px;background:#a9adc4;"></div>
<div class="a" style="left:631.8px;top:557.5px;width:9.5px;height:10.5px;background:linear-gradient(90deg,#f9f9fc,#d9dbe8);border:1px solid #b0b4c6;box-sizing:border-box;border-radius:1.5px;"></div>
<svg style="left:633.6px;top:561px" width="6" height="4" viewBox="0 0 6 4"><path d="M0.8 0.6L3 3l2.2-2.4" fill="none" stroke="#2c3350" stroke-width="1.3"/></svg>
<div class="a" style="left:174.3px;top:332.8px;width:146.7px;height:34.8px;background:#fff;border:1px solid #2a2a8a;box-sizing:border-box;"></div>
<div class="a" style="left:174.3px;top:332.8px;width:146.7px;height:9.7px;background:#2a2a8c;"></div>
<div class="t" style="left:176.8px;top:333.2px;font-size:6.95px;font-weight:bold;color:#fff;">Dortmund</div>
<svg style="left:176.8px;top:344.2px" width="6" height="7" viewBox="0 0 7 8"><circle cx="3.5" cy="2.2" r="1.9" fill="#d9b48a" stroke="#7a6a5a" stroke-width="0.5"/><path d="M0.4 7.8c0-3 1.3-3.8 3.1-3.8s3.1.8 3.1 3.8z" fill="#7d9ad0" stroke="#4a5f95" stroke-width="0.5"/></svg>
<div class="a" style="left:186.0px;top:346.0px;width:37.0px;height:5.5px;background:#fbf8ea;filter:blur(0.8px);"></div>
<div class="t" style="left:226.5px;top:343.7px;font-size:7.35px;color:#1a1a1a;">- 44357 Dortmund (131</div>
<div class="t" style="left:176.5px;top:350.8px;font-size:7.50px;color:#1a1a1a;">km)</div>
<svg style="left:176.8px;top:358.6px" width="6" height="7" viewBox="0 0 7 8"><circle cx="3.5" cy="2.2" r="1.9" fill="#d9b48a" stroke="#7a6a5a" stroke-width="0.5"/><path d="M0.4 7.8c0-3 1.3-3.8 3.1-3.8s3.1.8 3.1 3.8z" fill="#7d9ad0" stroke="#4a5f95" stroke-width="0.5"/></svg>
<div class="a" style="left:186.0px;top:360.2px;width:29.0px;height:5.5px;background:#fbf8ea;filter:blur(0.8px);"></div>
<div class="t" style="left:218.5px;top:357.8px;font-size:7.65px;color:#1a1a1a;">- 44357 Dortmund (131 km)</div>
<div class="a" style="left:30.0px;top:568.0px;width:612.0px;height:15.5px;background:linear-gradient(#fdfdfe,#ececf2 45%,#d9dae4);border-top:1px solid #9d9fb0;box-sizing:border-box;"></div>
<div class="t" style="left:31.0px;top:571.8px;font-size:6.42px;letter-spacing:-0.02px;color:#222;">javascript:void(0);</div>
<div class="a" style="left:368.0px;top:570.5px;width:1.0px;height:11.0px;background:#fcfcfd;box-shadow:-1px 0 0 #dfe0e7;"></div>
<div class="a" style="left:377.5px;top:570.5px;width:1.0px;height:11.0px;background:#fcfcfd;box-shadow:-1px 0 0 #dfe0e7;"></div>
<div class="a" style="left:388.0px;top:570.5px;width:1.0px;height:11.0px;background:#fcfcfd;box-shadow:-1px 0 0 #dfe0e7;"></div>
<div class="a" style="left:403.0px;top:570.5px;width:1.0px;height:11.0px;background:#fcfcfd;box-shadow:-1px 0 0 #dfe0e7;"></div>
<div class="a" style="left:417.5px;top:570.5px;width:1.0px;height:11.0px;background:#fcfcfd;box-shadow:-1px 0 0 #dfe0e7;"></div>
<div class="a" style="left:432.0px;top:570.5px;width:1.0px;height:11.0px;background:#fcfcfd;box-shadow:-1px 0 0 #dfe0e7;"></div>
<div class="a" style="left:443.5px;top:570.5px;width:1.0px;height:11.0px;background:#fcfcfd;box-shadow:-1px 0 0 #dfe0e7;"></div>
<div class="a" style="left:566.0px;top:570.5px;width:1.0px;height:11.0px;background:#fcfcfd;box-shadow:-1px 0 0 #dfe0e7;"></div>
<svg style="left:461.5px;top:571.5px" width="10" height="10" viewBox="0 0 10 10"><circle cx="5" cy="5" r="4.3" fill="#2f9ab8" stroke="#1d6f92" stroke-width="0.7"/><path d="M2.5 2.8c1.2-.6 2 .3 1.6 1.4-.3.9-1.4 1-1.2 2.2M6 6.5c.3-1 1.4-1.2 2-.6-.2 1-.9 1.7-1.8 2z" fill="#7fd06a"/></svg>
<div class="t" style="left:474.0px;top:571.6px;font-size:6.78px;color:#222;">Internet</div>
<svg style="left:588.5px;top:571.5px" width="9" height="9" viewBox="0 0 9 9"><circle cx="5" cy="3.6" r="2.6" fill="#eaf2ff" stroke="#5a7ab8" stroke-width="1"/><path d="M3.2 5.4L0.9 8" stroke="#5a7ab8" stroke-width="1.4" stroke-linecap="round"/><path d="M1 1.2h2M2 .2v2" stroke="#3a58a8" stroke-width="0.7"/></svg>
<div class="t" style="left:597.5px;top:571.6px;font-size:6.84px;color:#222;">100%</div>
<div class="ar" style="left:624.4px;top:575.5px;border-top-color:#333;border-left-width:2.1px;border-right-width:2.1px;border-top-width:2.6px"></div>

<!-- ================= TASKBAR ================= -->
<div class="a" style="left:9.3px;top:585.0px;width:741.0px;height:15.0px;background:linear-gradient(#f6f6f9 0,#ffffff 8%,#d6d7e3 24%,#c6c8d8 36%,#cfd1dd 65%,#dddee7 100%);"></div>
<div class="a" style="left:9.3px;top:585.3px;width:58.0px;height:15.0px;background:linear-gradient(#86d680,#46ac49 28%,#2f9436 70%,#2a8230);border-radius:0 6px 7px 0;box-shadow:inset 0 1px 1px #b4eab0,inset -2px 0 2px #1f6a24;"></div>
<svg style="left:16.5px;top:587.5px" width="10" height="10" viewBox="0 0 10 10"><path d="M0.6 1.6c1.3-.9 2.5-.8 3.7 0v3C3.100 3.800 1.900 3.700.6 4.600z" fill="#e8553a"/><path d="M5 1.800c1.300-.900 2.500-.800 3.700 0v3c-1.200-.800-2.400-.900-3.700 0z" fill="#7fc040" transform="translate(0.300,-0.600)"/><path d="M0.600 5.400c1.300-.900 2.500-.800 3.700 0v3c-1.200-.800-2.400-.900-3.700 0z" fill="#4a8ae0"/><path d="M5.300 5.200c1.300-.900 2.500-.800 3.700 0v3c-1.200-.800-2.400-.900-3.700 0z" fill="#f0c030"/></svg>
<div class="t" style="left:29.6px;top:587.7px;font-size:9.92px;font-weight:bold;color:#fff;font-style:italic;text-shadow:0.6px 0.8px 1px #1a4a1a;">Start</div>
<div class="a" style="left:75.0px;top:587.0px;width:89.5px;height:13.5px;background:linear-gradient(#ffffff,#f3f3f8);border:1px solid #c5c6d4;border-bottom:none;border-radius:2px 2px 0 0;box-sizing:border-box;"></div>
<svg style="left:80.5px;top:588.5px" width="9" height="10" viewBox="0 0 20 22"><ellipse cx="10" cy="11" rx="9.5" ry="4.2" transform="rotate(-32 10 11)" fill="none" stroke="#e8b730" stroke-width="2.2"/><circle cx="10" cy="12" r="6.2" fill="none" stroke="#2f7fd0" stroke-width="3.6"/><rect x="5" y="10.6" width="11" height="2.6" fill="#2f7fd0"/></svg>
<div class="t" style="left:90.5px;top:588.5px;font-size:6.42px;letter-spacing:-0.30px;color:#222;">Neue Add Ons mit vB ...</div>
<div class="a" style="left:167.0px;top:587.0px;width:92.5px;height:13.5px;background:linear-gradient(#62657c,#74778e);border:1px solid #4e5068;border-bottom:none;border-radius:2px 2px 0 0;box-sizing:border-box;"></div>
<svg style="left:173.0px;top:588.5px" width="9" height="10" viewBox="0 0 20 22"><ellipse cx="10" cy="11" rx="9.5" ry="4.2" transform="rotate(-32 10 11)" fill="none" stroke="#e8b730" stroke-width="2.2"/><circle cx="10" cy="12" r="6.2" fill="none" stroke="#2f7fd0" stroke-width="3.6"/><rect x="5" y="10.6" width="11" height="2.6" fill="#2f7fd0"/></svg>
<div class="t" style="left:184.0px;top:588.5px;font-size:6.42px;letter-spacing:-0.07px;color:#fff;">CnC Foren - Mitgliede...</div>
<div class="t" style="left:685.5px;top:588.8px;font-size:6.42px;letter-spacing:-1.42px;color:#222;">DE</div>
<div class="a" style="left:704.0px;top:586.3px;width:46.0px;height:14.0px;background:linear-gradient(#fbfbfd,#e6e7ee);border-left:1px solid #b9bbc9;box-sizing:border-box;"></div>
<svg style="left:699.5px;top:588.5px" width="11" height="11" viewBox="0 0 11 11"><circle cx="5.5" cy="5.500" r="4.800" fill="#c9cad2" stroke="#85879a" stroke-width="0.8"/><path d="M6.800 2.800L4 5.500l2.800 2.700" fill="none" stroke="#fff" stroke-width="1.300"/></svg>
<svg style="left:712.5px;top:589.5px" width="9" height="9" viewBox="0 0 9 9"><circle cx="3.200" cy="5.200" r="2.800" fill="#3fae4a"/><circle cx="6.200" cy="3.400" r="2.200" fill="#8fd88a"/></svg>
<div class="a" style="left:722.5px;top:588.5px;width:11.0px;height:10.5px;background:#d8202c;border-radius:1px;"></div>
<div class="t" style="left:724.5px;top:588.7px;font-size:9.69px;font-weight:bold;color:#fff;">R</div>
<div class="t" style="left:736.5px;top:588.7px;font-size:8.40px;letter-spacing:0.62px;color:#222;">20:41</div>

</body>
</html>
